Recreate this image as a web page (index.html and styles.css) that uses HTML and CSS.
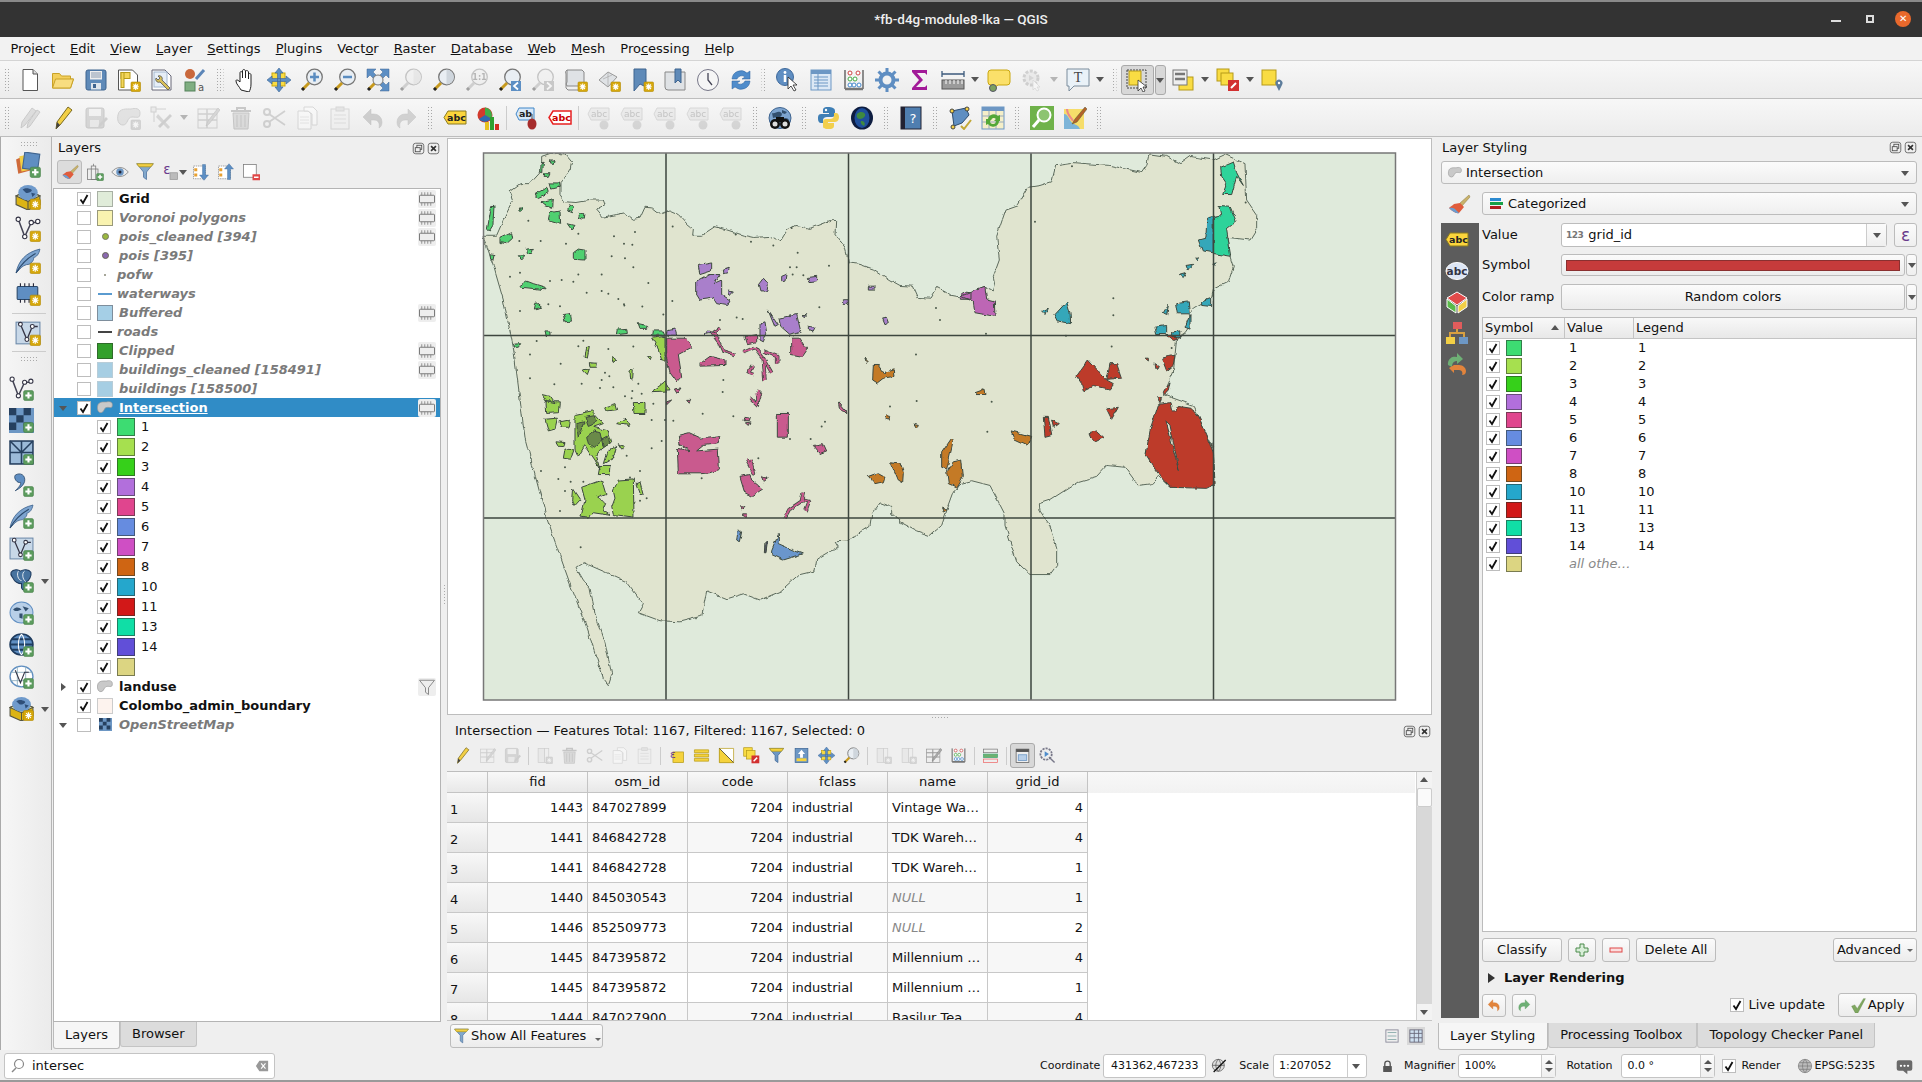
FILE: index.html
```html
<!DOCTYPE html>
<html lang="en">
<head>
<meta charset="utf-8">
<title>*fb-d4g-module8-lka — QGIS</title>
<link rel="stylesheet" href="styles.css">
</head>
<body>
<svg class="defs" width="0" height="0">
<defs>
<symbol id="gb" viewBox="0 0 24 24"><rect x="14" y="14" width="9.5" height="9.5" rx="1" fill="#d6a80c" stroke="#b38a00" stroke-width=".6"/><path d="M18.7 15.5v6.5M15.7 18.7h6M16.5 16.5l4.500 4.500M21 16.500l-4.500 4.500" stroke="#fff" stroke-width="1.100"/></symbol>
<symbol id="pb" viewBox="0 0 24 24"><rect x="14" y="14" width="9.500" height="9.500" rx="1.500" fill="#5c9c5e" stroke="#3f7a42" stroke-width=".5"/><path d="M18.700 15.700v6M15.700 18.700h6" stroke="#fff" stroke-width="2"/></symbol>
<symbol id="new" viewBox="0 0 24 24"><path d="M5 1.500h10l4.500 4.500v16.500H5z" fill="#fff" stroke="#555"/><path d="M15 1.500v4.500h4.500" fill="#ddd" stroke="#555"/></symbol>
<symbol id="open" viewBox="0 0 24 24"><path d="M1.500 20V5.500h7l2 2.500h9v3h3l-3 9z" fill="#f3cf5c" stroke="#c9a227"/><path d="M1.500 20l3-9h18l-3 9z" fill="#f8dd80" stroke="#c9a227"/></symbol>
<symbol id="save" viewBox="0 0 24 24"><rect x="2" y="2" width="20" height="20" rx="2" fill="#5f8ab8" stroke="#3f648f"/><rect x="6" y="3" width="12" height="8.500" fill="#eee"/><path d="M7 5h10M7 7h10M7 9h10" stroke="#8a9bb0"/><rect x="7" y="15" width="10" height="6.500" fill="#dfe5ec"/><rect x="9" y="16" width="3" height="4" fill="#3f648f"/></symbol>
<symbol id="layout" viewBox="0 0 24 24"><path d="M1.500 2h14l5 5v15h-19z" fill="#fff" stroke="#555"/><rect x="4" y="4.500" width="9" height="6" fill="#f3d65a" stroke="#b59a18"/><rect x="4" y="4.500" width="3" height="15" fill="#f3d65a" stroke="#b59a18"/><use href="#gb"/></symbol>
<symbol id="manager" viewBox="0 0 24 24"><path d="M2 2h13l6 6v14H2z" fill="#fff" stroke="#667"/><rect x="4" y="4" width="13" height="15" fill="#e6eef7" stroke="#a4b8d0"/><path d="M8 8a3 3 0 0 1 4 4l8 8-2 2-8-8a3 3 0 0 1-4-4l2 2 2-2z" fill="#d8c05a" stroke="#555" stroke-width=".8"/></symbol>
<symbol id="style" viewBox="0 0 24 24"><circle cx="7" cy="6" r="5" fill="#c9683c"/><path d="M13 11l8-9" stroke="#5c86b8" stroke-width="3"/><rect x="2" y="14" width="10" height="9" fill="#7fae81" stroke="#55825a"/><text x="15" y="23" font-size="10" fill="#555" font-family="DejaVu Sans">a</text></symbol>
<symbol id="hand" viewBox="0 0 24 24"><path d="M7 22c-2-4-5-6-5-9 0-2 2-1 4 1V5c0-2 2-2 2.500 0v5-7c0-2 2.500-2 3 0v7-6c0-2 2.500-2 3 0v7-4c0-2 2.500-2 2.500 0v9c0 4-1 6-2 8z" fill="#fff" stroke="#222"/></symbol>
<symbol id="pan" viewBox="0 0 24 24"><rect x="5" y="5" width="13" height="13" fill="#f9dc43" stroke="#caa70f"/><path d="M12 0l4 5h-2.500v14H16l-4 5-4-5h2.500V5H8zM0 12l5-4v2.500h14V8l5 4-5 4v-2.500H5V16z" fill="#5d8fc4" stroke="#3c6595" stroke-width=".6"/></symbol>
<symbol id="mag" viewBox="0 0 24 24"><circle cx="14.500" cy="9" r="7.800" fill="#e9eef3" stroke="#777" stroke-width="1.300"/><path d="M9 15l-6.500 6.500" stroke="#c79a1e" stroke-width="3"/><path d="M4 20l-2 2" stroke="#222" stroke-width="3"/></symbol>
<symbol id="zin" viewBox="0 0 24 24"><use href="#mag"/><path d="M14.500 4.500v9M10 9h9" stroke="#5a8cc0" stroke-width="2.500"/></symbol>
<symbol id="zout" viewBox="0 0 24 24"><use href="#mag"/><path d="M10 9h9" stroke="#5a8cc0" stroke-width="2.500"/></symbol>
<symbol id="zfull" viewBox="0 0 24 24"><path d="M1 1h9l-3 3 3 3-3 3-3-3-3 3zM23 1v9l-3-3-3 3-3-3 3-3-3-3zM23 23h-9l3-3-3-3 3-3 3 3 3-3z" fill="#5d8fc4" stroke="#3c6595" stroke-width=".5"/><path d="M9 15l-6 6" stroke="#c79a1e" stroke-width="3"/><path d="M4 20l-2 2" stroke="#222" stroke-width="3"/><circle cx="12" cy="12" r="5" fill="#e9eef3" stroke="#777"/></symbol>
<symbol id="zlayer" viewBox="0 0 24 24"><use href="#mag"/><path d="M14.500 1.500a7.500 7.500 0 0 1 0 15z" fill="#cfd6dd"/></symbol>
<symbol id="z11" viewBox="0 0 24 24"><use href="#mag"/><text x="14.500" y="12" font-size="8" text-anchor="middle" fill="#555" font-family="DejaVu Sans" font-weight="700">1:1</text></symbol>
<symbol id="zlast" viewBox="0 0 24 24"><use href="#mag"/><rect x="13" y="13" width="10" height="10" fill="#5d8fc4"/><path d="M20 14.500l-4 3.500 4 3.500" fill="none" stroke="#fff" stroke-width="1.800"/></symbol>
<symbol id="znext" viewBox="0 0 24 24"><use href="#mag"/><rect x="13" y="13" width="10" height="10" fill="#5d8fc4"/><path d="M16 14.500l4 3.500-4 3.500" fill="none" stroke="#fff" stroke-width="1.800"/></symbol>
<symbol id="newmap" viewBox="0 0 24 24"><path d="M3 2h15l2 2v14H3a3 3 0 0 1 0-4z" fill="#dfe2e5" stroke="#888"/><path d="M3 2a3 3 0 0 0-1 4v14l2 2h10" fill="none" stroke="#888"/><use href="#gb"/></symbol>
<symbol id="new3d" viewBox="0 0 24 24"><path d="M2 12l9-8 9 5-9 10z" fill="#dfe2e5" stroke="#999"/><path d="M6 11l9-4M11 4v15" stroke="#aaa" stroke-width=".7"/><use href="#gb"/></symbol>
<symbol id="bookmark" viewBox="0 0 24 24"><path d="M4 1h12v18l-6-3-6 7z" fill="#5f8ab8" stroke="#3f648f"/><use href="#gb"/></symbol>
<symbol id="bookmarks" viewBox="0 0 24 24"><path d="M2 4h20v18H5a3 3 0 0 1-3-3z" fill="#dfe2e5" stroke="#888"/><path d="M12 1h6v14l-3-3-3 3z" fill="#5f8ab8" stroke="#3f648f"/></symbol>
<symbol id="clock" viewBox="0 0 24 24"><circle cx="12" cy="12" r="10.500" fill="#f5f5f5" stroke="#778"/><path d="M12 5v7l4 5" fill="none" stroke="#445" stroke-width="1.300"/></symbol>
<symbol id="refresh" viewBox="0 0 24 24"><path d="M3 11a9 9 0 0 1 15-6l3-2v8h-8l3-2a5 5 0 0 0-8 2z" fill="#4f8ccb" stroke="#2f629c" stroke-width=".5"/><path d="M21 13a9 9 0 0 1-15 6l-3 2v-8h8l-3 2a5 5 0 0 0 8-2z" fill="#4f8ccb" stroke="#2f629c" stroke-width=".5"/></symbol>
<symbol id="identify" viewBox="0 0 24 24"><circle cx="9" cy="9" r="8.500" fill="#5f8ec2" stroke="#3f6a9c"/><path d="M9 7v7" stroke="#fff" stroke-width="2.500"/><circle cx="9" cy="4.500" r="1.400" fill="#fff"/><path d="M12 9v12l3-3 3 5 2-1-3-5h4z" fill="#fff" stroke="#222" stroke-width=".8"/></symbol>
<symbol id="table" viewBox="0 0 24 24"><rect x="2" y="2" width="20" height="20" fill="#dce8f5" stroke="#6d97c4"/><rect x="2" y="2" width="20" height="4" fill="#6d97c4"/><path d="M5 9h14M5 12h14M5 15h14M5 18h14M9 6v16" stroke="#6d97c4"/></symbol>
<symbol id="calc" viewBox="0 0 24 24"><path d="M3 2v19M21 2v19" stroke="#555" stroke-width="1.300"/><path d="M3 21h18" stroke="#777" stroke-width="2.500"/><circle cx="8" cy="5" r="2" fill="#fff" stroke="#c44"/><circle cx="16" cy="5" r="2" fill="#fff" stroke="#c44"/><circle cx="8" cy="11" r="2" fill="#fff" stroke="#4a4"/><circle cx="13" cy="11" r="2" fill="#fff" stroke="#4a4"/><circle cx="8" cy="17" r="2" fill="#fff" stroke="#48c"/><circle cx="12" cy="17" r="2" fill="#fff" stroke="#48c"/><circle cx="17" cy="17" r="2" fill="#fff" stroke="#48c"/></symbol>
<symbol id="gear" viewBox="0 0 24 24"><circle cx="12" cy="12" r="6.500" fill="none" stroke="#5f8ec2" stroke-width="4"/><path d="M12 0v5M12 19v5M0 12h5M19 12h5M3.500 3.500L7 7M17 17l3.500 3.500M20.500 3.500L17 7M7 17l-3.500 3.500" stroke="#5f8ec2" stroke-width="3"/></symbol>
<symbol id="sigma" viewBox="0 0 24 24"><path d="M4 2h15v5l-2-2H9l6 7-7 7h9l2-2v5H4v-2l7-8-7-8z" fill="#a21a98"/></symbol>
<symbol id="ruler" viewBox="0 0 24 24"><path d="M1 6h22M1 3v6M23 3v6" stroke="#3c5a7c" stroke-width="1.300"/><rect x="1" y="12" width="22" height="9" fill="#9a9a9a" stroke="#555"/><path d="M5 12v4M9 12v4M13 12v4M17 12v4M21 12v4" stroke="#fff"/></symbol>
<symbol id="balloon" viewBox="0 0 24 24"><path d="M4 2h16a3 3 0 0 1 3 3v9a3 3 0 0 1-3 3H11l-4 3v-3H4a3 3 0 0 1-3-3V5a3 3 0 0 1 3-3z" fill="#fbe06a" stroke="#caa70f"/><circle cx="6" cy="20" r="3.500" fill="#7da060" stroke="#556"/></symbol>
<symbol id="action" viewBox="0 0 24 24"><circle cx="11" cy="10" r="7" fill="#ddd" stroke="#999" stroke-width="3" stroke-dasharray="3 1.500"/><path d="M9 7l5 3-5 3z" fill="#aaa"/><path d="M13 12v10l2-2 2 3 2-1-2-3h3z" fill="#fff" stroke="#aaa" stroke-width=".7"/></symbol>
<symbol id="textann" viewBox="0 0 24 24"><path d="M1 1h22v17H8l-5 5v-5H1z" fill="#eaf2f8" stroke="#7a8c9c"/><text x="12" y="14" font-size="14" text-anchor="middle" fill="#444" font-family="Liberation Serif">T</text></symbol>
<symbol id="select" viewBox="0 0 24 24"><rect x="2" y="2" width="19" height="18" fill="none" stroke="#444" stroke-dasharray="2 1"/><rect x="4" y="3" width="12" height="14" fill="#f9dc43" stroke="#b59a18"/><path d="M13 12v11l3-3 2 4 2-1-2-4h4z" fill="#fff" stroke="#333" stroke-width=".8"/></symbol>
<symbol id="selform" viewBox="0 0 24 24"><rect x="8" y="9" width="14" height="13" fill="#f9dc43" stroke="#b59a18"/><rect x="2" y="2" width="14" height="15" fill="#eee" stroke="#777"/><path d="M4 6h10M4 11h10" stroke="#777" stroke-width="2.500"/></symbol>
<symbol id="desel" viewBox="0 0 24 24"><rect x="1" y="1" width="12" height="12" fill="#f9dc43" stroke="#b59a18"/><rect x="5" y="5" width="12" height="12" fill="#f9dc43" stroke="#b59a18"/><rect x="12" y="12" width="11" height="11" fill="#d23030"/><path d="M15 20l5-5" stroke="#fff" stroke-width="2"/></symbol>
<symbol id="selloc" viewBox="0 0 24 24"><rect x="1" y="2" width="14" height="15" fill="#f9dc43" stroke="#b59a18"/><path d="M18 23l-3-6a3.500 3.500 0 1 1 6 0z" fill="#5d7d9c"/><circle cx="18" cy="15" r="1.200" fill="#fff"/></symbol>
<symbol id="pencils" viewBox="0 0 24 24"><path d="M3 22l1-6L14 2l4 3L7 19zM9 22l1-5L19 4l3 2L12 20z" fill="#bbb" stroke="#888"/></symbol>
<symbol id="pencil" viewBox="0 0 24 24"><path d="M5 23l1-7L17 1l4 3L9 19z" fill="#f2cf45" stroke="#7a6a20"/><path d="M5 23l1-7 3 3z" fill="#444"/></symbol>
<symbol id="saveedit" viewBox="0 0 24 24"><rect x="2" y="2" width="18" height="20" rx="2" fill="#aaa" stroke="#888"/><rect x="5" y="3" width="12" height="7" fill="#eee"/><rect x="6" y="14" width="9" height="7" fill="#ddd"/><path d="M14 22l1-4 7-7 2 2-7 7z" fill="#999"/></symbol>
<symbol id="blob" viewBox="0 0 24 24"><path d="M1 9c1-7 9-6 13-6 4-1 9-1 9 4 0 6-3 4-8 4s-4 8-9 8-6-6-5-10z" fill="#c9c9c9" stroke="#999"/></symbol>
<symbol id="digit" viewBox="0 0 24 24"><use href="#blob"/><use href="#gb"/></symbol>
<symbol id="tools" viewBox="0 0 24 24"><rect x="1" y="1" width="5" height="5" fill="#ddd" stroke="#999"/><path d="M6 3h10M4 6v10" stroke="#999"/><path d="M8 8l12 13-2 2L6 11z" fill="#aaa"/><path d="M20 8L8 20l2 2 12-12z" fill="#999"/></symbol>
<symbol id="tabedit" viewBox="0 0 24 24"><rect x="2" y="3" width="19" height="19" fill="#eee" stroke="#999"/><path d="M2 8h19M2 14h19M11 3v19" stroke="#999" stroke-width="1.500"/><path d="M10 20l2-5L22 2l2 2-11 14z" fill="#aaa" stroke="#777" stroke-width=".6"/></symbol>
<symbol id="trash" viewBox="0 0 24 24"><path d="M2 5h20M8 5V2h8v3" fill="none" stroke="#a77" stroke-width="2"/><path d="M4 7h16l-1 16H5z" fill="#c4b4b4" stroke="#977"/><path d="M8 9v12M12 9v12M16 9v12" stroke="#977"/></symbol>
<symbol id="scissors" viewBox="0 0 24 24"><circle cx="5" cy="6" r="3" fill="none" stroke="#999" stroke-width="2"/><circle cx="5" cy="18" r="3" fill="none" stroke="#999" stroke-width="2"/><path d="M7 8l16 11M7 16L23 5" stroke="#999" stroke-width="1.800"/></symbol>
<symbol id="copy" viewBox="0 0 24 24"><path d="M3 5h10l3 3v15H3z" fill="#fff" stroke="#aaa"/><path d="M9 1h9l4 4v14h-5V8l-4-3H9z" fill="#fff" stroke="#aaa"/><path d="M5 11h9M5 14h9M5 17h9" stroke="#ccc"/></symbol>
<symbol id="paste" viewBox="0 0 24 24"><rect x="3" y="3" width="18" height="20" fill="#eee" stroke="#aaa"/><rect x="8" y="1" width="8" height="4" fill="#ccc" stroke="#aaa"/><path d="M6 9h12M6 13h12M6 17h12" stroke="#bbb"/></symbol>
<symbol id="undo" viewBox="0 0 24 24"><path d="M10 3v5h3a8 8 0 0 1 8 8c0 3-1 5-3 6 1-5-1-8-5-8h-3v5L2 11z" fill="#e2843c" stroke="#c96a20" stroke-width=".5"/></symbol>
<symbol id="redo" viewBox="0 0 24 24"><path d="M14 3v5h-3a8 8 0 0 0-8 8c0 3 1 5 3 6-1-5 1-8 5-8h3v5l8-8z" fill="#6eb075" stroke="#4e9055" stroke-width=".5"/></symbol>
<symbol id="labelc" viewBox="0 0 24 24"><path d="M5 5h18v13H5l-4-6.500z" fill="#fbd53c" stroke="#8a7a20"/><text x="13.500" y="15" font-size="9.500" font-weight="700" text-anchor="middle" fill="#222" font-family="DejaVu Sans">abc</text></symbol>
<symbol id="diagram" viewBox="0 0 24 24"><circle cx="9" cy="9" r="7.500" fill="#d23a2c"/><path d="M9 9V1.500a7.500 7.500 0 0 1 6 11z" fill="#3fae49"/><path d="M9 9l6 3.500A7.500 7.500 0 0 1 3 13z" fill="#2c6ab0"/><rect x="9" y="16" width="4" height="8" fill="#e8c020"/><rect x="14" y="11" width="4" height="13" fill="#2fa030"/><rect x="19" y="18" width="4" height="6" fill="#d03020"/></symbol>
<symbol id="labelpin" viewBox="0 0 24 24"><path d="M4 2h15v12H4l-3-6z" fill="#d8e8f8" stroke="#3f86c8"/><text x="10.500" y="11" font-size="9.500" font-weight="700" text-anchor="middle" fill="#222" font-family="DejaVu Sans">ab</text><path d="M17 8v6" stroke="#555"/><ellipse cx="17" cy="18" rx="4.500" ry="5.500" fill="#a62c2c"/></symbol>
<symbol id="labelred" viewBox="0 0 24 24"><path d="M5 5h18v13H5l-4-6.500z" fill="#fff" stroke="#e82020" stroke-width="1.500"/><text x="13.500" y="15" font-size="9.500" font-weight="700" text-anchor="middle" fill="#c00" font-family="DejaVu Sans">abc</text></symbol>
<symbol id="labelgray" viewBox="0 0 24 24"><path d="M4 2h18v12H4l-3-6z" fill="#ddd" stroke="#aaa"/><text x="12" y="11" font-size="9" text-anchor="middle" fill="#777" font-family="DejaVu Sans">abc</text><circle cx="17" cy="19" r="4.500" fill="#aaa"/></symbol>
<symbol id="globe" viewBox="0 0 24 24"><ellipse cx="12" cy="12" rx="11" ry="10.500" fill="#7da4cf" stroke="#3f648f"/><path d="M4 7c3 1 5-2 8-1s2 4 0 5-5 0-7 1zM14 13c3-2 6-1 7 1-2 4-4 5-6 4zM14 4l5 2-2 2-3-1z" fill="#33506f"/></symbol>
<symbol id="binoc" viewBox="0 0 24 24"><use href="#globe"/><circle cx="7" cy="18" r="5" fill="#111"/><circle cx="17" cy="18" r="5" fill="#111"/><circle cx="7" cy="18" r="2.500" fill="#ddd"/><circle cx="17" cy="18" r="2.500" fill="#ddd"/><rect x="8" y="11" width="8" height="5" fill="#111"/></symbol>
<symbol id="python" viewBox="0 0 24 24"><path d="M11 1c-5 0-5 2-5 4v2h6v1H4C1 8 1 11 1 13s1 4 3 4h2v-3c0-2 2-3 4-3h5c2 0 3-1 3-3V5c0-3-3-4-7-4z" fill="#3f7fb5"/><path d="M12 23c5 0 5-2 5-4v-2h-6v-1h7c3 0 4-3 4-5s-1-4-3-4h-2v3c0 2-2 3-4 3H9c-2 0-3 1-3 3v4c0 3 2 3 6 3z" fill="#f2cf4c"/><circle cx="9" cy="4" r="1.200" fill="#fff"/></symbol>
<symbol id="earth" viewBox="0 0 24 24"><ellipse cx="12" cy="12" rx="11" ry="11.500" fill="#0e1d40"/><ellipse cx="12" cy="12" rx="7.500" ry="10" fill="#1f4f9c"/><path d="M7 8c3-3 7-2 8 0s-2 5-5 5-4-3-3-5zM11 15c3 0 5 2 3 5-2-1-4-3-3-5z" fill="#3f8a3f"/></symbol>
<symbol id="help" viewBox="0 0 24 24"><rect x="2" y="1" width="20" height="22" fill="#4f7eb0" stroke="#223"/><rect x="2" y="1" width="4" height="22" fill="#223"/><text x="14" y="17" font-size="13" text-anchor="middle" fill="#fff" font-family="DejaVu Sans">?</text></symbol>
<symbol id="topo" viewBox="0 0 24 24"><path d="M4 5l14-3 3 7-7 8-8 3z" fill="#5f8ec2" stroke="#2c4a6c"/><circle cx="4" cy="5" r="2" fill="#f2cf45" stroke="#444"/><circle cx="19" cy="3" r="2" fill="#f2cf45" stroke="#444"/><circle cx="5" cy="21" r="2" fill="#f2cf45" stroke="#444"/><path d="M13 20l3 3 7-9" fill="none" stroke="#c2a838" stroke-width="2"/></symbol>
<symbol id="tabref" viewBox="0 0 24 24"><rect x="1" y="1" width="22" height="22" fill="#f5efc8" stroke="#6d97c4"/><rect x="1" y="1" width="22" height="4" fill="#6d97c4"/><path d="M1 10h22M1 16h22M8 5v18M15 5v18" stroke="#9ab"/><path d="M7 13a6 6 0 0 1 10-3l2-1v6h-6l2-2a3 3 0 0 0-5 1zM18 15a6 6 0 0 1-11 3l-2 1v-6h6l-2 2a3 3 0 0 0 6 0z" fill="#53a838"/></symbol>
<symbol id="gsearch" viewBox="0 0 24 24"><rect width="24" height="24" fill="#6fb24a"/><circle cx="14" cy="9" r="6.500" fill="#8cc470" stroke="#fff" stroke-width="2"/><path d="M9 14l-6 7" stroke="#fff" stroke-width="3"/></symbol>
<symbol id="mapedit" viewBox="0 0 24 24"><rect x="1" y="3" width="20" height="20" fill="#f6dd6a"/><path d="M1 8c5 0 5 8 10 10s5 3 6 5H1z" fill="#7db4d8"/><path d="M4 3c0 6 4 8 6 12" stroke="#e88" stroke-width="2" fill="none"/><path d="M9 18l3-5L22 1l2 2-10 13z" fill="#b4622a" stroke="#553" stroke-width=".5"/></symbol>
<symbol id="brush" viewBox="0 0 24 24"><path d="M13 11l9-8 1 2-8 9z" fill="#c9b26a" stroke="#8a7a40" stroke-width=".5"/><path d="M13 11l4 4-5 6c-3 1-7-2-10-5 1-1 4-3 5-4z" fill="#e05c3c"/><path d="M2 16c3-1 6 0 8 3l2 2c-3 1-7-2-10-5z" fill="#6b9dd0"/></symbol>
<symbol id="addlayer" viewBox="0 0 24 24"><path d="M1 7l10-5 3 15-11 3z" fill="#cf6a3a"/><path d="M4 4l11-2 1 14-10 2z" fill="#f2cf45"/><rect x="8" y="1" width="14" height="15" fill="#5f8ec2" stroke="#3f648f" transform="rotate(8 15 8)"/><use href="#pb"/></symbol>
<symbol id="cube" viewBox="0 0 24 24"><path d="M1 11l11-5 11 5v8l-11 5-11-5z" fill="#dcb414" stroke="#554"/><path d="M12 13v11" stroke="#554"/><path d="M1 11l11 5 11-5-11-5z" fill="#f0e8a0" stroke="#554"/><ellipse cx="12" cy="8" rx="9" ry="7" fill="#6f9acb"/><path d="M7 5c3-2 6-1 8 0s-2 4-5 3zM15 8l4 1-3 3z" fill="#2f4f78"/></symbol>
<symbol id="vtx" viewBox="0 0 24 24"><path d="M3 3l6 16 6-13h5" fill="none" stroke="#445" stroke-width="1.400"/><circle cx="3" cy="3" r="2" fill="#fff" stroke="#334"/><circle cx="9" cy="19" r="2" fill="#fff" stroke="#334"/><circle cx="15" cy="6" r="2" fill="#fff" stroke="#334"/><circle cx="21" cy="5" r="2" fill="#fff" stroke="#334"/></symbol>
<symbol id="feather" viewBox="0 0 24 24"><path d="M1 23C3 12 10 4 23 1c-1 5-3 7-6 8 1 2-2 5-4 6-3 0-7 2-9 5z" fill="#7da4cf" stroke="#3f648f" stroke-width=".8"/><path d="M1 23C6 14 12 9 19 5" stroke="#2c4a6c" fill="none"/></symbol>
<symbol id="chip" viewBox="0 0 24 24"><rect x="2" y="6" width="19" height="12" rx="1" fill="#5f8ec2" stroke="#2c4a6c"/><path d="M5 3v3M9 3v3M13 3v3M17 3v3M5 18v3M9 18v3M13 18v3M17 18v3" stroke="#223"/></symbol>
<symbol id="vframe" viewBox="0 0 24 24"><rect x="1" y="2" width="22" height="20" fill="#c8d8e8" stroke="#6d8aaa"/><path d="M5 4l6 14 5-12h5" fill="none" stroke="#334" stroke-width="1.200"/><circle cx="11" cy="18" r="1.800" fill="#fff" stroke="#334"/><circle cx="5" cy="4" r="1.800" fill="#fff" stroke="#334"/><circle cx="16" cy="6" r="1.800" fill="#fff" stroke="#334"/></symbol>
<symbol id="raster" viewBox="0 0 24 24"><rect width="24" height="24" fill="#6d97c4"/><path d="M0 0h7v7H0zM14 0h7v7h-7zM7 7h7v7H7zM0 14h7v7H0zM14 14h7v7h-7z" fill="#26405f"/></symbol>
<symbol id="mesh" viewBox="0 0 24 24"><rect x="1" y="1" width="22" height="22" fill="#9bbad8" stroke="#26405f" stroke-width="1.500"/><path d="M1 12h22M12 1v22M1 1l11 11M23 1L12 12" stroke="#26405f" stroke-width="1.500"/></symbol>
<symbol id="comma" viewBox="0 0 24 24"><path d="M6 3c5-3 10 0 9 6-1 4-5 7-9 9 3-3 6-6 5-8-3 1-7-4-5-7z" fill="#5f8ec2" stroke="#2c4a6c" stroke-width=".8"/></symbol>
<symbol id="pg" viewBox="0 0 24 24"><path d="M2 4c2-3 7-3 9-1 3-2 8-2 10 1 1 4-2 8-4 9v6c0 3-4 3-5 0v-4c-3 0-7-2-8-5-1-2-3-3-2-6z" fill="#47739f" stroke="#1f3c5f"/><path d="M9 3c-2 3 0 9 3 9M15 3c-3 2-2 8 1 10" stroke="#fff" fill="none" stroke-width=".8"/></symbol>
<symbol id="wms" viewBox="0 0 24 24"><ellipse cx="12" cy="12" rx="11" ry="10" fill="#b8cfe8" stroke="#5f8ec2"/><path d="M4 9c3-3 6-2 8 0-2 1-6 3-8 0zM13 6l6 2-3 3zM10 13l3 0 0 5-3-1z" fill="#33506f"/></symbol>
<symbol id="wcs" viewBox="0 0 24 24"><ellipse cx="12" cy="12" rx="11" ry="10" fill="#5f8ec2" stroke="#1f3c5f" stroke-width="1.500"/><path d="M1 12h22M3 7h18M3 17h18" stroke="#1f3c5f" stroke-width="2"/><path d="M12 2c-4 5-4 15 0 20M12 2c4 5 4 15 0 20" stroke="#fff" fill="none"/></symbol>
<symbol id="wfs" viewBox="0 0 24 24"><ellipse cx="12" cy="12" rx="11" ry="10" fill="#fff" stroke="#5f8ec2" stroke-width="1.300"/><path d="M1 8h22M1 16h22M8 2v20M16 2v20" stroke="#8ab" stroke-width=".8"/><path d="M6 6l5 12 4-10h4" fill="none" stroke="#334"/></symbol>
<symbol id="filterfn" viewBox="0 0 24 24"><path d="M1 1h22l-9 11v10l-4-3v-7z" fill="#82a8cc" stroke="#4a6f9c"/><path d="M1 1h22l-3 4H4z" fill="#f2cf45" stroke="#b59a18"/></symbol>
<symbol id="eye" viewBox="0 0 24 24"><path d="M1 12c6-8 16-8 22 0-6 8-16 8-22 0z" fill="#eee" stroke="#777"/><circle cx="12" cy="12" r="5" fill="#6d97c4"/><circle cx="12" cy="12" r="2" fill="#223"/></symbol>
<symbol id="addgroup" viewBox="0 0 24 24"><rect x="2" y="8" width="14" height="14" fill="#eee" stroke="#777"/><rect x="7" y="4" width="6" height="18" fill="none" stroke="#777"/><path d="M10 4V1" stroke="#777"/><use href="#pb"/></symbol>
<symbol id="expr" viewBox="0 0 24 24"><text x="8" y="14" font-size="18" text-anchor="middle" fill="#6a3b8c" font-family="DejaVu Sans">ε</text><rect x="12" y="13" width="10" height="9" fill="#bbb" stroke="#999"/></symbol>
<symbol id="expand" viewBox="0 0 24 24"><rect x="2" y="4" width="16" height="17" fill="#fff" stroke="#888" stroke-dasharray="2 1"/><rect x="3" y="7" width="4" height="4" fill="#e8a030"/><rect x="3" y="14" width="4" height="4" fill="#e8a030"/><path d="M14 2v14h-4l6 7 6-7h-4V2z" fill="#5d8fc4" stroke="#3c6595" stroke-width=".5"/></symbol>
<symbol id="collapse" viewBox="0 0 24 24"><rect x="2" y="4" width="16" height="17" fill="#fff" stroke="#888" stroke-dasharray="2 1"/><rect x="3" y="7" width="4" height="4" fill="#e8a030"/><rect x="3" y="14" width="4" height="4" fill="#e8a030"/><path d="M14 22V8h-4l6-7 6 7h-4v14z" fill="#5d8fc4" stroke="#3c6595" stroke-width=".5"/></symbol>
<symbol id="remove" viewBox="0 0 24 24"><rect x="2" y="2" width="17" height="17" fill="#fff" stroke="#777"/><rect x="14" y="15" width="10" height="8" fill="#e04848"/><rect x="16" y="18" width="6" height="2" fill="#fff"/></symbol>
<symbol id="memind" viewBox="0 0 24 24"><rect x="2" y="7" width="20" height="10" rx="1" fill="#eee" stroke="#777" stroke-width="1.300"/><path d="M5 3v4M9 3v4M13 3v4M17 3v4M5 17v4M9 17v4M13 17v4M17 17v4" stroke="#888" stroke-width="1.200"/></symbol>
<symbol id="filterind" viewBox="0 0 24 24"><path d="M2 3h20l-8 10v9l-4-3v-6z" fill="#eee" stroke="#888" stroke-width="1.300"/></symbol>
<symbol id="selrows" viewBox="0 0 24 24"><path d="M2 4h20v4H2zM2 10h20v4H2zM2 16h20v4H2z" fill="#f5d23c" stroke="#b59a18"/></symbol>
<symbol id="selexp" viewBox="0 0 24 24"><rect x="7" y="7" width="15" height="15" fill="#f5d23c" stroke="#b59a18"/><text x="7" y="15" font-size="15" text-anchor="middle" fill="#6a3b8c" font-family="DejaVu Sans">ε</text></symbol>
<symbol id="invert" viewBox="0 0 24 24"><path d="M2 2h20v20H2z" fill="#fff" stroke="#b59a18"/><path d="M2 2v20h20z" fill="#f5d23c" stroke="#b59a18"/><path d="M2 2l20 20" stroke="#444"/></symbol>
<symbol id="selfilter" viewBox="0 0 24 24"><path d="M2 2h20l-8 10v10l-4-3v-7z" fill="#6d97c4" stroke="#3c6595"/><path d="M2 2h20l-3 4H5z" fill="#f5d23c" stroke="#b59a18"/></symbol>
<symbol id="movetop" viewBox="0 0 24 24"><rect x="3" y="2" width="18" height="20" fill="#6d97c4" stroke="#3c6595"/><rect x="5" y="16" width="14" height="4" fill="#f5d23c"/><path d="M12 4l5 6h-3v5h-4v-5H7z" fill="#fff"/></symbol>
<symbol id="addfield" viewBox="0 0 24 24"><rect x="3" y="2" width="9" height="20" fill="#ddd" stroke="#999"/><rect x="12" y="2" width="6" height="20" fill="#eee" stroke="#999"/><use href="#gb"/></symbol>
<symbol id="organize" viewBox="0 0 24 24"><rect x="2" y="3" width="20" height="5" fill="#eee" stroke="#777"/><rect x="2" y="10" width="20" height="5" fill="#6fb06f" stroke="#4a7"/><rect x="2" y="17" width="20" height="5" fill="#eee" stroke="#e66"/></symbol>
<symbol id="dock" viewBox="0 0 24 24"><rect x="3" y="3" width="18" height="19" fill="#eee" stroke="#555"/><rect x="3" y="3" width="18" height="4" fill="#555"/><rect x="6" y="11" width="12" height="8" fill="#b8cfe8" stroke="#5f8ec2"/></symbol>
<symbol id="actions" viewBox="0 0 24 24"><circle cx="10" cy="10" r="8" fill="#eee" stroke="#778" stroke-width="2.500" stroke-dasharray="3 1.500"/><path d="M8 6l6 4-6 4z" fill="#4f8ccb"/><path d="M14 14l8 8" stroke="#778" stroke-width="2"/></symbol>
<symbol id="cubes" viewBox="0 0 24 24"><path d="M12 2l10 6-10 7L2 8z" fill="#e24a4a" stroke="#fff"/><path d="M2 9l9 7v7l-9-6z" fill="#5ab94a" stroke="#fff"/><path d="M22 9l-9 7v7l9-6z" fill="#f2cf45" stroke="#fff"/></symbol>
<symbol id="tree" viewBox="0 0 24 24"><rect x="8" y="1" width="9" height="7" fill="#e05c5c"/><rect x="1" y="16" width="9" height="7" fill="#f2cf45"/><rect x="14" y="16" width="9" height="7" fill="#6d97c4"/><path d="M12 8v4M5 16v-4h14v4" stroke="#d8a040" stroke-width="2" fill="none"/></symbol>
<symbol id="hist" viewBox="0 0 24 24"><path d="M3 13a7 7 0 0 1 9-8V1l6 6-6 5V9c-3 0-5 2-5 6z" fill="#6eb075"/><path d="M9 13h5c4 0 7 3 7 6s-2 4-4 4c1-2 0-5-3-5h-5v3l-5-5z" fill="#e2843c"/></symbol>
<symbol id="abcw" viewBox="0 0 24 24"><ellipse cx="12" cy="12" rx="11" ry="8.500" fill="#dde6f5" stroke="#fff"/><text x="12" y="16" font-size="10.500" font-weight="700" text-anchor="middle" fill="#334" font-family="DejaVu Sans">abc</text></symbol>
<symbol id="globegrid" viewBox="0 0 24 24"><circle cx="12" cy="12" r="10" fill="#bbb" stroke="#777"/><path d="M2 12h20M12 2c-5 6-5 14 0 20M12 2c5 6 5 14 0 20M4 7h16M4 17h16" stroke="#777" fill="none"/></symbol>
<symbol id="chat" viewBox="0 0 24 24"><path d="M4 3h16a3 3 0 0 1 3 3v9a3 3 0 0 1-3 3h-4v5l-6-5H4a3 3 0 0 1-3-3V6a3 3 0 0 1 3-3z" fill="#6a6a6a"/><circle cx="7" cy="11" r="1.600" fill="#fff"/><circle cx="12" cy="11" r="1.600" fill="#fff"/><circle cx="17" cy="11" r="1.600" fill="#fff"/></symbol>
<symbol id="lock" viewBox="0 0 24 24"><path d="M7 11V7a5 5 0 0 1 10 0v4" fill="none" stroke="#555" stroke-width="2.500"/><rect x="4" y="11" width="16" height="11" rx="1" fill="#555"/></symbol>
<symbol id="crs" viewBox="0 0 24 24"><circle cx="11" cy="11" r="9" fill="#ddd" stroke="#444"/><path d="M2 11h18M11 2c-5 5-5 13 0 18M11 2c5 5 5 13 0 18" stroke="#444" fill="none"/><path d="M4 21L22 3" stroke="#111" stroke-width="2"/></symbol>
<symbol id="x" viewBox="0 0 16 16"><rect x="1.500" y="1.500" width="13" height="13" rx="3" fill="none" stroke="#555"/><path d="M5 5l6 6M11 5l-6 6" stroke="#333" stroke-width="2"/></symbol>
<symbol id="float" viewBox="0 0 16 16"><rect x="1.500" y="1.500" width="13" height="13" rx="3" fill="none" stroke="#555"/><rect x="6" y="4" width="6" height="5" fill="none" stroke="#444"/><rect x="4" y="7" width="6" height="5" fill="#eee" stroke="#444"/></symbol>
<symbol id="plus" viewBox="0 0 24 24"><path d="M9 3h6v6h6v6h-6v6H9v-6H3V9h6z" fill="#d8eed8" stroke="#4a8a4a" stroke-width="1.500"/></symbol>
<symbol id="minus" viewBox="0 0 24 24"><rect x="3" y="9" width="18" height="6" fill="#fbdede" stroke="#e04848" stroke-width="1.500"/></symbol>
<symbol id="apply" viewBox="0 0 24 24"><path d="M1 13l5-2 4 6L20 1h3L11 24H7z" fill="#7fa860" stroke="#5a7e40" stroke-width=".6"/></symbol>
<symbol id="search" viewBox="0 0 16 16"><circle cx="9" cy="6" r="4.500" fill="none" stroke="#888" stroke-width="1.200"/><path d="M6 10l-4 4" stroke="#888" stroke-width="1.400"/></symbol>
<symbol id="clear" viewBox="0 0 16 16"><path d="M5 2h10v12H5L1 8z" fill="#999"/><path d="M7 5l5 6M12 5l-5 6" stroke="#fff" stroke-width="1.300"/></symbol>
<symbol id="filtericon" viewBox="0 0 24 24"><path d="M1 1h22l-9 10v12l-4-3V11z" fill="#82a8cc" stroke="#4a6f9c"/><path d="M1 1h22l-3 4H4z" fill="#f2cf45" stroke="#b59a18"/></symbol>
<symbol id="viewform" viewBox="0 0 16 16"><rect x="1" y="1" width="14" height="14" fill="#eee" stroke="#889"/><path d="M3 4h10M3 8h10M3 12h10" stroke="#8aa"/></symbol>
<symbol id="viewtable" viewBox="0 0 16 16"><rect x="1" y="1" width="14" height="14" fill="#cfe0f0" stroke="#667"/><path d="M1 5h14M1 10h14M6 1v14M11 1v14" stroke="#667"/></symbol>
<filter id="rough" filterUnits="userSpaceOnUse" x="-20" y="-20" width="2840" height="1640"><feTurbulence type="fractalNoise" baseFrequency="0.035 0.04" numOctaves="3" seed="4"/><feDisplacementMap in="SourceGraphic" scale="13" xChannelSelector="R" yChannelSelector="G"/></filter>
</defs>
</svg>

<div class="app">
  <header class="titlebar">
    <span></span>
    <span class="title-text">*fb-d4g-module8-lka — QGIS</span>
    <div class="wincontrols">
      <span class="win-min"></span>
      <span class="win-max"></span>
      <span class="win-close">✕</span>
    </div>
  </header>

  <nav class="menubar">
    <span>Pro<u>j</u>ect</span><span><u>E</u>dit</span><span><u>V</u>iew</span><span><u>L</u>ayer</span><span><u>S</u>ettings</span><span><u>P</u>lugins</span><span>Vect<u>o</u>r</span><span><u>R</u>aster</span><span><u>D</u>atabase</span><span><u>W</u>eb</span><span><u>M</u>esh</span><span>Pro<u>c</u>essing</span><span><u>H</u>elp</span>
  </nav>

  <div class="toolbar tb-first">
    <i class="grip g-narrow"></i>
    <b class="tb"><svg><use href="#new"/></svg></b><b class="tb"><svg><use href="#open"/></svg></b><b class="tb"><svg><use href="#save"/></svg></b><b class="tb"><svg><use href="#layout"/></svg></b><b class="tb"><svg><use href="#manager"/></svg></b><b class="tb"><svg><use href="#style"/></svg></b>
    <i class="grip g-wide"></i>
    <b class="tb"><svg><use href="#hand"/></svg></b><b class="tb"><svg><use href="#pan"/></svg></b><b class="tb"><svg><use href="#zin"/></svg></b><b class="tb"><svg><use href="#zout"/></svg></b><b class="tb"><svg><use href="#zfull"/></svg></b><b class="tb off"><svg><use href="#zlayer"/></svg></b><b class="tb"><svg><use href="#zlayer"/></svg></b><b class="tb off"><svg><use href="#z11"/></svg></b><b class="tb"><svg><use href="#zlast"/></svg></b><b class="tb off"><svg><use href="#znext"/></svg></b><b class="tb"><svg><use href="#newmap"/></svg></b><b class="tb"><svg><use href="#new3d"/></svg></b><b class="tb"><svg><use href="#bookmark"/></svg></b><b class="tb"><svg><use href="#bookmarks"/></svg></b><b class="tb"><svg><use href="#clock"/></svg></b><b class="tb"><svg><use href="#refresh"/></svg></b>
    <i class="grip g-mid"></i>
    <b class="tb"><svg><use href="#identify"/></svg></b><b class="tb"><svg><use href="#table"/></svg></b><b class="tb"><svg><use href="#calc"/></svg></b><b class="tb"><svg><use href="#gear"/></svg></b><b class="tb"><svg><use href="#sigma"/></svg></b><b class="tb"><svg><use href="#ruler"/></svg></b><i class="drop"></i><b class="tb"><svg><use href="#balloon"/></svg></b><b class="tb off"><svg><use href="#action"/></svg></b><i class="drop off"></i><b class="tb"><svg><use href="#textann"/></svg></b><i class="drop"></i>
    <i class="grip g-mid"></i>
    <b class="tb tb-active"><svg><use href="#select"/></svg></b><i class="drop drop-active"></i><b class="tb tb-slim"><svg><use href="#selform"/></svg></b><i class="drop"></i><b class="tb tb-slim"><svg><use href="#desel"/></svg></b><i class="drop"></i><b class="tb tb-slim"><svg><use href="#selloc"/></svg></b>
  </div>

  <div class="toolbar tb-second">
    <i class="grip g-narrow"></i>
    <b class="tb off"><svg><use href="#pencils"/></svg></b><b class="tb"><svg><use href="#pencil"/></svg></b><b class="tb off"><svg><use href="#saveedit"/></svg></b><b class="tb off"><svg><use href="#digit"/></svg></b><b class="tb off"><svg><use href="#tools"/></svg></b><i class="drop off"></i><b class="tb off"><svg><use href="#tabedit"/></svg></b><b class="tb off"><svg><use href="#trash"/></svg></b><b class="tb off"><svg><use href="#scissors"/></svg></b><b class="tb off"><svg><use href="#copy"/></svg></b><b class="tb off"><svg><use href="#paste"/></svg></b><b class="tb off"><svg><use href="#undo"/></svg></b><b class="tb off"><svg><use href="#redo"/></svg></b>
    <i class="grip"></i>
    <b class="tb"><svg><use href="#labelc"/></svg></b><b class="tb"><svg><use href="#diagram"/></svg></b><i class="sep"></i><b class="tb"><svg><use href="#labelpin"/></svg></b><b class="tb"><svg><use href="#labelred"/></svg></b><i class="sep"></i><b class="tb off"><svg><use href="#labelgray"/></svg></b><b class="tb off"><svg><use href="#labelgray"/></svg></b><b class="tb off"><svg><use href="#labelgray"/></svg></b><b class="tb off"><svg><use href="#labelgray"/></svg></b><b class="tb off"><svg><use href="#labelgray"/></svg></b>
    <i class="grip"></i>
    <b class="tb"><svg><use href="#binoc"/></svg></b>
    <i class="grip"></i>
    <b class="tb"><svg><use href="#python"/></svg></b><b class="tb"><svg><use href="#earth"/></svg></b>
    <i class="grip"></i>
    <b class="tb"><svg><use href="#help"/></svg></b>
    <i class="grip"></i>
    <b class="tb"><svg><use href="#topo"/></svg></b><b class="tb"><svg><use href="#tabref"/></svg></b>
    <i class="grip"></i>
    <b class="tb"><svg><use href="#gsearch"/></svg></b><b class="tb"><svg><use href="#mapedit"/></svg></b>
    <i class="grip"></i>
  </div>

  <main class="workspace">
    <aside class="leftbar">
      <i class="hgrip"></i>
      <div class="lb-group lb-a">
        <b class="lb"><svg><use href="#addlayer"/></svg></b>
        <b class="lb"><svg><use href="#cube"/><use href="#gb"/></svg></b>
        <b class="lb"><svg><use href="#vtx"/><use href="#gb"/></svg></b>
        <b class="lb"><svg><use href="#feather"/><use href="#gb"/></svg></b>
        <b class="lb"><svg><use href="#chip"/><use href="#gb"/></svg></b>
        <i class="hsep"></i>
        <b class="lb"><svg><use href="#vframe"/><use href="#gb"/></svg></b>
        <i class="hsep"></i>
      </div>
      <i class="hgrip"></i>
      <div class="lb-group lb-b">
        <b class="lb"><svg><use href="#vtx"/><use href="#pb"/></svg></b>
        <b class="lb"><svg><use href="#raster"/><use href="#pb"/></svg></b>
        <b class="lb"><svg><use href="#mesh"/><use href="#pb"/></svg></b>
        <b class="lb"><svg><use href="#comma"/><use href="#pb"/></svg></b>
        <b class="lb"><svg><use href="#feather"/><use href="#pb"/></svg></b>
        <b class="lb"><svg><use href="#vframe"/><use href="#pb"/></svg></b>
        <b class="lb lb-dd"><svg><use href="#pg"/><use href="#pb"/></svg><i class="drop"></i></b>
        <b class="lb"><svg><use href="#wms"/><use href="#pb"/></svg></b>
        <b class="lb"><svg><use href="#wcs"/><use href="#pb"/></svg></b>
        <b class="lb"><svg><use href="#wfs"/><use href="#pb"/></svg></b>
        <b class="lb lb-dd"><svg><use href="#cube"/><use href="#gb"/></svg><i class="drop"></i></b>
      </div>
    </aside>

    <section class="layers-dock">
      <div class="dock-title dt-l"><span>Layers</span><span class="dock-btns"><svg><use href="#float"/></svg><svg><use href="#x"/></svg></span></div>
      <div class="panel-tools">
        <b class="pt pt-active"><svg><use href="#brush"/></svg></b><b class="pt"><svg><use href="#addgroup"/></svg></b><b class="pt"><svg><use href="#eye"/></svg></b><b class="pt"><svg><use href="#filterfn"/></svg></b><b class="pt"><svg><use href="#expr"/></svg></b><i class="drop drop-sm"></i><b class="pt"><svg><use href="#expand"/></svg></b><b class="pt"><svg><use href="#collapse"/></svg></b><b class="pt"><svg><use href="#remove"/></svg></b>
      </div>
      <div class="tree">
        <div class="row on"><i class="exp"></i><i class="chk ck"></i><i class="sym sq s-grid"></i><span>Grid</span><svg class="ind"><use href="#memind"/></svg></div>
        <div class="row"><i class="exp"></i><i class="chk"></i><i class="sym sq s-vor"></i><span>Voronoi polygons</span><svg class="ind"><use href="#memind"/></svg></div>
        <div class="row"><i class="exp"></i><i class="chk"></i><i class="sym"><i class="pt-dot d-pc"></i></i><span>pois_cleaned [394]</span><svg class="ind"><use href="#memind"/></svg></div>
        <div class="row"><i class="exp"></i><i class="chk"></i><i class="sym"><i class="pt-dot d-p"></i></i><span>pois [395]</span></div>
        <div class="row"><i class="exp"></i><i class="chk"></i><i class="sym sym-line"><i class="pt-dot d-w"></i></i><span>pofw</span></div>
        <div class="row"><i class="exp"></i><i class="chk"></i><i class="sym sym-line"><i class="ln l-water"></i></i><span>waterways</span></div>
        <div class="row"><i class="exp"></i><i class="chk"></i><i class="sym sq s-buf"></i><span>Buffered</span><svg class="ind"><use href="#memind"/></svg></div>
        <div class="row"><i class="exp"></i><i class="chk"></i><i class="sym sym-line"><i class="ln l-road"></i></i><span>roads</span></div>
        <div class="row"><i class="exp"></i><i class="chk"></i><i class="sym sq s-clip"></i><span>Clipped</span><svg class="ind"><use href="#memind"/></svg></div>
        <div class="row"><i class="exp"></i><i class="chk"></i><i class="sym sq s-bld"></i><span>buildings_cleaned [158491]</span><svg class="ind"><use href="#memind"/></svg></div>
        <div class="row"><i class="exp"></i><i class="chk"></i><i class="sym sq s-bld"></i><span>buildings [158500]</span></div>
        <div class="row sel"><i class="exp open"></i><i class="chk ck"></i><svg class="sym blob"><use href="#blob"/></svg><span>Intersection</span><svg class="ind"><use href="#memind"/></svg></div>
        <div class="child"><i class="chk ck"></i><i class="sw c1"></i><span>1</span></div>
        <div class="child"><i class="chk ck"></i><i class="sw c2"></i><span>2</span></div>
        <div class="child"><i class="chk ck"></i><i class="sw c3"></i><span>3</span></div>
        <div class="child"><i class="chk ck"></i><i class="sw c4"></i><span>4</span></div>
        <div class="child"><i class="chk ck"></i><i class="sw c5"></i><span>5</span></div>
        <div class="child"><i class="chk ck"></i><i class="sw c6"></i><span>6</span></div>
        <div class="child"><i class="chk ck"></i><i class="sw c7"></i><span>7</span></div>
        <div class="child"><i class="chk ck"></i><i class="sw c8"></i><span>8</span></div>
        <div class="child"><i class="chk ck"></i><i class="sw c10"></i><span>10</span></div>
        <div class="child"><i class="chk ck"></i><i class="sw c11"></i><span>11</span></div>
        <div class="child"><i class="chk ck"></i><i class="sw c13"></i><span>13</span></div>
        <div class="child"><i class="chk ck"></i><i class="sw c14"></i><span>14</span></div>
        <div class="child"><i class="chk ck"></i><i class="sw c0"></i><span></span></div>
        <div class="row on"><i class="exp shut"></i><i class="chk ck"></i><svg class="sym blob"><use href="#blob"/></svg><span>landuse</span><svg class="ind ind-f"><use href="#filterind"/></svg></div>
        <div class="row on"><i class="exp"></i><i class="chk ck"></i><i class="sym sq s-col"></i><span>Colombo_admin_boundary</span></div>
        <div class="row"><i class="exp open"></i><i class="chk"></i><svg class="sym rast"><use href="#raster"/></svg><span>OpenStreetMap</span></div>
      </div>
      <div class="tabs">
        <span class="tab tab-on">Layers</span><span class="tab">Browser</span>
      </div>
    </section>

    <div class="vsplit"><i></i></div>

    <section class="center">
      <div class="mapcanvas">
        <svg class="map" viewBox="448 139 983 575">
          <rect x="483.500" y="153" width="912" height="547" fill="#dfeadb"/>
          <g transform="translate(470 140) scale(.33333 .36364)">
            <g filter="url(#rough)">
            <path class="land" d="M215 45L240 37 285 38 305 60 300 85 270 120 270 150 285 170 320 172 365 165 400 165 405 178 380 190 400 212 440 205 465 200 490 218 510 215 525 185 550 187 575 205 600 195 625 205 650 230 670 245 668 262 695 262 735 238 770 247 820 262 850 268 905 265 930 280 950 250 975 235 1020 243 1090 218 1097 225 1095 260 1125 295 1132 320 1135 338 1170 342 1210 355 1260 385 1290 400 1330 402 1345 433 1380 435 1400 405 1430 420 1440 427 1470 432 1545 405 1570 415 1575 400 1570 375 1588 330 1580 265 1608 190 1645 178 1675 130 1710 125 1745 115 1758 68 1805 62 1920 70 2015 90 2030 70 2037 38 2090 45 2130 65 2160 45 2230 55 2265 40 2325 65 2330 165 2360 205 2360 245 2340 275 2275 268 2280 320 2290 350 2275 390 2230 410 2225 435 2170 465 2155 480 2160 510 2145 530 2120 545 2110 640 2080 700 2170 730 2230 850 2235 950 2100 955 2065 925 2045 945 2005 950 1965 900 1910 895 1880 925 1825 940 1740 990 1708 1000 1710 1020 1740 1060 1760 1120 1760 1170 1740 1195 1680 1195 1640 1160 1605 1060 1605 1030 1560 950 1505 937 1470 945 1450 970 1430 1020 1415 1060 1380 1088 1340 1075 1290 1050 1265 1030 1265 1010 1230 998 1205 1030 1200 1060 1130 1103 1095 1105 1105 1120 1040 1155 1035 1185 990 1195 935 1240 870 1265 820 1248 770 1262 710 1240 695 1310 630 1325 570 1322 505 1300 520 1275 470 1215 410 1190 340 1162 318 1175 340 1210 360 1230 375 1300 405 1380 425 1470 415 1498 400 1480 350 1340 300 1220 230 1040 165 820 130 570 100 440 70 345 50 290 40 270 50 262 80 262 105 210 130 165 120 140 150 120 180 120 215 85Z"/>
            <path class="b g1" d="M65 180L75 180 72 230 58 250 52 245ZM90 270L125 255 128 270 110 285 90 282ZM325 300L345 303 345 330 310 328 310 310ZM150 400L170 388 190 395 225 405 228 412 155 405ZM240 200L270 195 272 232 235 222ZM212 170L250 162 248 188 225 180ZM295 178L310 185 305 200 290 195ZM330 200L342 203 340 218 325 215ZM292 230L315 235 305 247ZM240 118L265 118 268 130 245 135ZM195 150L230 130 235 145 205 158ZM225 90L240 90 235 100 222 100ZM213 65L220 65 218 90 212 88ZM445 520L470 518 472 532 442 535ZM280 480L298 478 302 498 285 500ZM195 445L215 460 190 465ZM550 525L580 525 585 537 548 537ZM240 55L252 55 250 65 238 63ZM145 187L158 187 155 196 147 195ZM60 315L75 318 72 330 62 328ZM225 525L240 525 240 540 228 540ZM170 300L190 298 185 312 172 312ZM145 318L165 320 155 330ZM505 505L530 510 530 518 510 518ZM130 562L152 560 145 570 135 570Z"/>
            <path class="b g2" d="M335 955L395 935 408 975 380 985 410 1000 400 1020 420 1032 370 1025 355 1040 333 1037 345 990ZM445 935L490 932 492 1037 430 1030 425 1010 435 985 430 965ZM315 755L365 745 400 780 370 790 415 800 425 830 395 850 380 870 390 905 375 880 345 840 325 870 315 850ZM228 720L268 720 265 750 230 752ZM225 768L262 765 255 795 235 800ZM490 722L525 722 525 752 492 752ZM545 545L585 540 585 605 575 605 565 575ZM545 692L585 665 600 690ZM358 612L382 614 380 625 360 625ZM400 735L435 725 440 742 405 745ZM440 780L465 765 478 785ZM285 850L312 852 302 878 280 875ZM390 895L420 895 418 920 385 920ZM510 940L520 975 510 975 498 945ZM270 775L298 770 295 790 275 790ZM215 700L240 705 255 725 230 720ZM410 860L440 840 430 875 400 890ZM258 830L285 832 280 843 262 842ZM445 835L465 845 455 850ZM308 960L330 990 315 1005 305 990ZM350 570L358 570 352 600 345 598ZM425 595L440 603 430 612ZM338 632L358 630 352 645ZM530 595L545 595 540 605ZM480 635L490 632 488 655 482 658Z"/>
            <path class="b dk" d="M320 780L345 775 335 800 325 820ZM350 815L370 800 390 805 395 825 370 845 355 835ZM395 825L415 815 420 835 400 845ZM345 760L375 755 380 775 355 785Z"/>
            <path class="br-under" d="M725 530L750 560 760 580 795 590M750 560L730 530 750 518M855 570L880 600 885 660M880 600L905 640M855 570L820 585M880 580L920 595 920 615M850 620L835 640 850 645M860 700L862 730 840 710M862 715L870 690M830 880L850 915 840 880M1000 970L995 990 1015 995 1005 1020M1000 990L960 1015 945 1040"/>
            <path class="br" d="M725 530L750 560 760 580 795 590M750 560L730 530 750 518M855 570L880 600 885 660M880 600L905 640M855 570L820 585M880 580L920 595 920 615M850 620L835 640 850 645M860 700L862 730 840 710M862 715L870 690M830 880L850 915 840 880M1000 970L995 990 1015 995 1005 1020M1000 990L960 1015 945 1040"/>
            <path class="b pk" d="M625 812L655 805 690 820 750 813 745 835 700 840 680 855 745 850 748 905 720 915 690 918 625 918 622 848 660 855 630 840ZM590 545L645 545 665 570 625 590 635 650 620 665 600 640 590 600ZM965 545L990 545 1010 575 995 595 965 590ZM810 925L840 920 845 935 878 960 845 980 825 970ZM922 752L955 752 955 820 922 820ZM690 615L720 595 765 605 765 620 690 622ZM1030 840L1060 835 1070 855 1050 862ZM825 540L860 535 860 555 832 560ZM1105 718L1130 745 1130 752 1108 735ZM610 685L630 682 618 697ZM590 720L605 715 590 728ZM650 716L662 716 658 724ZM825 760L838 762 835 772 822 772ZM826 778L840 775 835 785ZM875 925L892 932 880 940ZM812 1008L826 1010 815 1017ZM818 1028L830 1028 828 1037 818 1037Z"/>
            <path class="b pu" d="M685 345L725 338 725 360 690 370ZM680 390L720 370 750 370 730 395 755 385 755 425 780 440 770 455 740 450 730 435 690 440 680 425ZM880 380L895 395 890 415 870 415 865 398ZM930 490L980 480 992 525 960 535 935 515ZM895 470L925 510 915 515ZM760 355L778 350 775 362 762 365ZM1015 378L1040 375 1040 390 1020 392ZM935 375L948 370 945 388 935 390ZM870 505L885 500 890 530 880 555 870 550ZM590 525L615 520 620 537 590 537ZM1195 402L1215 402 1215 410 1195 410ZM1235 492L1250 490 1255 502 1242 508ZM775 415L790 418 780 428ZM1015 512L1035 515 1030 525 1015 522ZM1120 442L1135 442 1135 452 1122 452ZM712 525L735 530 705 535ZM995 480L1010 480 1005 487Z"/>
            <path class="b mg" d="M1470 430L1545 405 1550 440 1573 445 1575 485 1515 475 1510 445ZM1468 430L1485 418 1500 420 1500 438 1468 438Z"/>
            <path class="b or" d="M1210 620L1225 620 1240 640 1270 632 1272 650 1240 655 1222 668 1208 660ZM1185 597L1195 608 1190 612ZM1262 885L1290 888 1300 915 1298 942 1285 935ZM1195 925L1225 915 1245 925 1240 940 1215 945ZM1445 820L1450 825 1430 905 1415 900 1415 860ZM1450 885L1475 880 1480 925 1460 955 1435 945 1430 910ZM1250 758L1262 760 1260 770 1248 768ZM1332 780L1345 782 1340 792ZM1623 800L1685 815 1675 842 1635 825ZM1515 695L1545 685 1548 700 1520 700ZM1415 1012L1430 1018 1420 1023Z"/>
            <path class="b rd" d="M2065 728L2100 722 2105 745 2120 745 2125 730 2160 735 2185 760 2210 810 2230 860 2235 945 2210 958 2100 955 2080 935 2055 905 2028 865 2040 800ZM1820 650L1855 605 1880 630 1910 660 1930 670 1918 685 1870 675 1840 688 1835 670ZM1915 640L1920 615 1940 615 1955 655 1910 658ZM2075 600L2115 592 2110 620 2090 635ZM2080 695L2100 668 2095 690 2085 700ZM1910 740L1945 735 1925 768ZM1720 760L1735 760 1745 810 1725 815ZM1860 805L1880 800 1902 818 1872 832ZM2060 708L2075 708 2070 725ZM1745 770L1765 780 1750 790ZM2090 538L2115 536 2120 548 2110 552ZM2025 600L2035 600 2035 612ZM2055 615L2065 620 2058 632Z"/>
            <path class="b hole" d="M2088 772L2100 784 2128 912 2108 845Z"/>
            <path class="b te" d="M1755 480L1790 445 1800 475 1802 505 1765 498ZM2120 450L2155 445 2158 478 2125 478ZM2210 215L2230 210 2230 310 2200 305 2188 275 2208 270ZM2055 515L2090 510 2090 535 2060 535ZM2195 445L2225 435 2225 458 2195 455ZM2148 345L2168 342 2155 360ZM2128 370L2148 365 2140 378ZM2080 475L2095 452 2090 480ZM2145 515L2160 480 2160 520ZM1715 470L1732 462 1725 480ZM2105 528L2130 525 2128 540 2105 540ZM2230 340L2240 338 2235 345ZM2175 325L2185 325 2180 332Z"/>
            <path class="b mi" d="M2230 210L2255 205 2250 183 2280 185 2298 225 2270 245 2282 320 2230 312ZM2252 75L2290 60 2300 90 2320 125 2300 100 2285 150 2258 150 2270 120 2255 100Z"/>
            <path class="b bl" d="M905 1130L925 1085 925 1110 975 1130 1000 1138 940 1155 905 1140ZM805 1070L815 1075 808 1105 800 1100Z"/>
            <path class="b oth" d="M885 1108L892 1108 888 1135 883 1135Z"/>
            </g>
            <path class="dots" d="M150 190h0M175 222h0M148 278h0M212 278h0M288 285h0M325 258h0M432 265h0M462 285h0M495 253h0M487 288h0M425 320h0M465 325h0M490 350h0M275 385h0M325 370h0M395 370h0M535 393h0M415 423h0M395 415h0M445 437h0M462 452h0M517 458h0M150 470h0M235 452h0M270 457h0M608 238h0M607 443h0M797 260h0M843 280h0M910 290h0M965 242h0M983 310h0M1077 346h0M1048 460h0M960 350h0M968 370h0M980 350h0M1000 372h0M750 495h0M800 488h0M818 492h0M1398 462h0M1410 495h0M1338 590h0M1340 718h0M1260 733h0M760 660h0M758 693h0M698 753h0M790 760h0M1065 775h0M1055 788h0M960 822h0M1022 822h0M865 875h0M695 930h0M180 590h0M272 615h0M180 655h0M253 672h0M335 670h0M390 682h0M430 680h0M465 705h0M487 690h0M515 698h0M485 710h0M550 725h0M545 770h0M585 770h0M610 772h0M575 828h0M545 848h0M470 868h0M430 868h0M285 900h0M213 910h0M265 932h0M302 940h0M285 965h0M270 1020h0M332 1120h0M480 928h0M510 910h0M530 985h0M510 992h0M415 575h0M490 568h0M340 552h0M325 567h0M200 553h0M150 365h0M120 376h0M240 388h0M310 390h0M350 420h0M463 455h0M580 480h0M340 940h0M405 640h0M418 650h0M395 660h0M505 670h0M960 485h0M1565 720h0M1552 802h0M1806 72h0M1695 225h0M1930 435h0M1930 482h0M1925 568h0M2105 572h0M1788 538h0M2327 172h0M1548 533h0"/>
          </g>
          <path class="grid" d="M666 153V700M848.500 153V700M1031 153V700M1213.500 153V700M483.500 335.500H1395.500M483.500 518H1395.500"/>
          <rect class="frame" x="483.500" y="153" width="912" height="547"/>
        </svg>
      </div>
      <div class="hsplit"><i></i></div>
      <div class="attr-title"><span>Intersection — Features Total: 1167, Filtered: 1167, Selected: 0</span><span class="dock-btns"><svg><use href="#float"/></svg><svg><use href="#x"/></svg></span></div>
      <div class="attr-tools">
        <b class="at"><svg><use href="#pencil"/></svg></b><b class="at off"><svg><use href="#tabedit"/></svg></b><b class="at off"><svg><use href="#saveedit"/></svg></b><i class="vs"></i><b class="at off"><svg><use href="#addfield"/></svg></b><b class="at off"><svg><use href="#trash"/></svg></b><b class="at off"><svg><use href="#scissors"/></svg></b><b class="at off"><svg><use href="#copy"/></svg></b><b class="at off"><svg><use href="#paste"/></svg></b><i class="vs"></i><b class="at"><svg><use href="#selexp"/></svg></b><b class="at"><svg><use href="#selrows"/></svg></b><b class="at"><svg><use href="#invert"/></svg></b><b class="at"><svg><use href="#desel"/></svg></b><b class="at"><svg><use href="#selfilter"/></svg></b><b class="at"><svg><use href="#movetop"/></svg></b><b class="at"><svg><use href="#pan"/></svg></b><b class="at"><svg><use href="#zlayer"/></svg></b><i class="vs"></i><b class="at off"><svg><use href="#addfield"/></svg></b><b class="at off"><svg><use href="#addfield"/></svg></b><b class="at"><svg><use href="#tabedit"/></svg></b><b class="at"><svg><use href="#calc"/></svg></b><i class="vs"></i><b class="at"><svg><use href="#organize"/></svg></b><i class="vs"></i><b class="at at-active"><svg><use href="#dock"/></svg></b><b class="at"><svg><use href="#actions"/></svg></b>
      </div>
      <div class="attr-table">
        <div class="attr-scroll">
          <table class="grid-table">
            <thead><tr><th class="rh"></th><th>fid</th><th>osm_id</th><th>code</th><th>fclass</th><th>name</th><th>grid_id</th><th class="fill"></th></tr></thead>
            <tbody>
              <tr><th class="rh">1</th><td class="n">1443</td><td>847027899</td><td class="n">7204</td><td>industrial</td><td>Vintage Wa…</td><td class="n">4</td><td class="fill"></td></tr>
              <tr><th class="rh">2</th><td class="n">1441</td><td>846842728</td><td class="n">7204</td><td>industrial</td><td>TDK Wareh…</td><td class="n">4</td><td class="fill"></td></tr>
              <tr><th class="rh">3</th><td class="n">1441</td><td>846842728</td><td class="n">7204</td><td>industrial</td><td>TDK Wareh…</td><td class="n">1</td><td class="fill"></td></tr>
              <tr><th class="rh">4</th><td class="n">1440</td><td>845030543</td><td class="n">7204</td><td>industrial</td><td class="null">NULL</td><td class="n">1</td><td class="fill"></td></tr>
              <tr><th class="rh">5</th><td class="n">1446</td><td>852509773</td><td class="n">7204</td><td>industrial</td><td class="null">NULL</td><td class="n">2</td><td class="fill"></td></tr>
              <tr><th class="rh">6</th><td class="n">1445</td><td>847395872</td><td class="n">7204</td><td>industrial</td><td>Millennium …</td><td class="n">4</td><td class="fill"></td></tr>
              <tr><th class="rh">7</th><td class="n">1445</td><td>847395872</td><td class="n">7204</td><td>industrial</td><td>Millennium …</td><td class="n">1</td><td class="fill"></td></tr>
              <tr><th class="rh">8</th><td class="n">1444</td><td>847027900</td><td class="n">7204</td><td>industrial</td><td>Basilur Tea…</td><td class="n">4</td><td class="fill"></td></tr>
            </tbody>
          </table>
        </div>
        <div class="scrollbar"><i class="sb-up"></i><i class="sb-handle"></i><i class="sb-track"></i><i class="sb-down"></i></div>
      </div>
      <div class="attr-foot">
        <span class="btn show-all"><svg><use href="#filtericon"/></svg>Show All Features<i class="mini-drop"></i></span>
        <span class="view-btns"><svg><use href="#viewform"/></svg><svg class="view-on"><use href="#viewtable"/></svg></span>
      </div>
    </section>

    <div class="vsplit"></div>

    <section class="styling-dock">
      <div class="dock-title dt-r"><span>Layer Styling</span><span class="dock-btns"><svg><use href="#float"/></svg><svg><use href="#x"/></svg></span></div>
      <div class="combo combo-layer"><svg class="c-ic"><use href="#blob"/></svg><span>Intersection</span><i class="c-arrow"></i></div>
      <div class="render-row">
        <span class="brush-tab"><svg><use href="#brush"/></svg></span>
        <div class="combo combo-render"><span class="cat-ic"><i class="ci1"></i><i class="ci2"></i><i class="ci3"></i></span><span>Categorized</span><i class="c-arrow"></i></div>
      </div>
      <div class="style-body">
        <div class="style-tabs">
          <svg><use href="#labelc"/></svg><svg><use href="#abcw"/></svg><svg><use href="#cubes"/></svg><svg><use href="#tree"/></svg><svg><use href="#hist"/></svg>
        </div>
        <div class="style-col">
          <div class="f-row f-value"><label>Value</label><div class="field"><span class="badge123">123</span><span>grid_id</span><span class="f-drop"><i class="c-arrow"></i></span></div><span class="eps">ε</span></div>
          <div class="f-row f-symbol"><label>Symbol</label><div class="btn sym-btn"><i></i></div><span class="side-drop"><i class="c-arrow"></i></span></div>
          <div class="f-row f-ramp"><label>Color ramp</label><div class="btn ramp-btn">Random colors</div><span class="side-drop"><i class="c-arrow"></i></span></div>
          <div class="cat-table">
            <div class="cat-head"><span class="ch1">Symbol<i class="up"></i></span><span class="ch2">Value</span><span class="ch3">Legend</span></div>
            <div class="cat-row"><i class="chk ck"></i><i class="sw c1"></i><span class="cv">1</span><span>1</span></div>
            <div class="cat-row"><i class="chk ck"></i><i class="sw c2"></i><span class="cv">2</span><span>2</span></div>
            <div class="cat-row"><i class="chk ck"></i><i class="sw c3"></i><span class="cv">3</span><span>3</span></div>
            <div class="cat-row"><i class="chk ck"></i><i class="sw c4"></i><span class="cv">4</span><span>4</span></div>
            <div class="cat-row"><i class="chk ck"></i><i class="sw c5"></i><span class="cv">5</span><span>5</span></div>
            <div class="cat-row"><i class="chk ck"></i><i class="sw c6"></i><span class="cv">6</span><span>6</span></div>
            <div class="cat-row"><i class="chk ck"></i><i class="sw c7"></i><span class="cv">7</span><span>7</span></div>
            <div class="cat-row"><i class="chk ck"></i><i class="sw c8"></i><span class="cv">8</span><span>8</span></div>
            <div class="cat-row"><i class="chk ck"></i><i class="sw c10"></i><span class="cv">10</span><span>10</span></div>
            <div class="cat-row"><i class="chk ck"></i><i class="sw c11"></i><span class="cv">11</span><span>11</span></div>
            <div class="cat-row"><i class="chk ck"></i><i class="sw c13"></i><span class="cv">13</span><span>13</span></div>
            <div class="cat-row"><i class="chk ck"></i><i class="sw c14"></i><span class="cv">14</span><span>14</span></div>
            <div class="cat-row"><i class="chk ck"></i><i class="sw c0"></i><span class="cv other">all othe…</span><span></span></div>
          </div>
          <div class="cat-btns">
            <span class="btn b-classify">Classify</span>
            <span class="btn b-icon"><svg><use href="#plus"/></svg></span>
            <span class="btn b-icon"><svg><use href="#minus"/></svg></span>
            <span class="btn b-del">Delete All</span>
            <span class="btn b-adv">Advanced<i class="mini-drop"></i></span>
          </div>
          <div class="rendering"><i class="big-arrow"></i>Layer Rendering</div>
          <div class="apply-row">
            <span class="btn b-undo"><svg><use href="#undo"/></svg></span>
            <span class="btn b-undo"><svg><use href="#redo"/></svg></span>
            <span class="live"><i class="chk ck"></i>Live update</span>
            <span class="btn b-apply"><svg><use href="#apply"/></svg>Apply</span>
          </div>
        </div>
      </div>
      <div class="tabs tabs-r">
        <span class="tab tab-on">Layer Styling</span><span class="tab">Processing Toolbox</span><span class="tab">Topology Checker Panel</span>
      </div>
    </section>
  </main>

  <footer class="statusbar">
    <div class="locator"><svg class="l-s"><use href="#search"/></svg><span>intersec</span><svg class="l-c"><use href="#clear"/></svg></div>
    <span class="s-lab s-coord">Coordinate</span><span class="s-field s-fcoord">431362,467233</span><svg class="s-ic crs-ic"><use href="#crs"/></svg>
    <span class="s-lab s-scale">Scale</span><span class="s-field s-fscale">1:207052<i class="c-arrow"></i></span><svg class="s-ic lock-ic"><use href="#lock"/></svg>
    <span class="s-lab s-magn">Magnifier</span><span class="s-field s-fmag">100%<i class="spin"></i></span>
    <span class="s-lab s-rot">Rotation</span><span class="s-field s-frot">0.0 °<i class="spin"></i></span>
    <i class="chk ck s-chk"></i><span class="s-lab s-rend">Render</span>
    <svg class="s-ic glob-ic"><use href="#globegrid"/></svg><span class="s-lab s-epsg">EPSG:5235</span>
    <svg class="s-ic chat-ic"><use href="#chat"/></svg>
  </footer>
</div>
</body>
</html>
```

FILE: styles.css
```css
* { box-sizing: border-box; }
html, body { margin: 0; padding: 0; }
body { width: 1922px; height: 1082px; overflow: hidden; font: 13px/1.2 "DejaVu Sans", "Liberation Sans", sans-serif; color: #111; background: #efefef; }
.defs { position: absolute; }
i, b { font-style: normal; font-weight: normal; }
.app { display: flex; flex-direction: column; height: 1082px; }

.titlebar { height: 37px; flex: none; display: grid; grid-template-columns: 1fr auto 1fr; align-items: center; padding-bottom: 2px; background: #333; border-top: 2px solid #8a8a8a; color: #eee; font: 500 13.5px "Roboto", sans-serif; }
.wincontrols { display: flex; align-items: center; justify-content: flex-end; gap: 22px; padding-right: 11px; }
.win-min { width: 10px; height: 2px; background: #ddd; margin-top: 5px; margin-right: 3px; }
.win-max { width: 8px; height: 8px; border: 2px solid #ddd; }
.win-close { width: 16px; height: 16px; border-radius: 50%; background: #e9692c; color: #fff; font-size: 10px; line-height: 16px; text-align: center; margin-left: -1px; }

.menubar { height: 23px; flex: none; display: flex; align-items: center; padding-left: 5px; background: #f2f2f2; font-size: 13px; }
.menubar span { padding: 0 5.5px; margin-right: 4px; }

.toolbar { flex: none; display: flex; align-items: center; padding-left: 2px; background: linear-gradient(#f7f7f7, #ececec); border-top: 1px solid #d4d4d4; }
.tb-first { height: 38px; }
.tb-second { height: 39px; border-top: 1px solid #bdbdbd; border-bottom: 1px solid #bdbdbd; }
.grip { width: 16px; height: 24px; flex: none; background: radial-gradient(circle, #a8a8a8 .8px, transparent 1px) 5px 0 / 3px 3px; background-repeat: repeat; clip-path: inset(0 5px); }
.g-narrow { width: 11px; clip-path: inset(0 3px); }
.g-wide { width: 18.500px; clip-path: inset(0 6px); }
.g-mid { width: 13.500px; clip-path: inset(0 4px); }
.tb { width: 33px; height: 30px; flex: none; display: flex; align-items: center; justify-content: center; }
.tb svg { width: 24px; height: 24px; }
.tb-slim { width: 32px; }
.off { opacity: .38; filter: grayscale(1); }
.tb-active { background: #d8d8d8; border: 1px solid #aaa; border-radius: 3px; }
.drop { flex: none; width: 13px; height: 7px; position: relative; display: block; }
.drop::after { content: ""; position: absolute; left: 2px; top: 1px; border: 4px solid transparent; border-top: 5px solid #555; border-bottom: 0; }
.drop-active { width: 11px; height: 30px; background: #d8d8d8; border: 1px solid #aaa; border-radius: 3px; margin-left: 1px; margin-right: 1px; }
.drop-active::after { top: 12px; left: 0; }
.drop-sm { width: 11px; margin-left: -5px; }
.sep { width: 1px; height: 24px; background: #ccc; margin: 0 3px 0 2px; flex: none; }

.workspace { flex: 1; min-height: 0; display: flex; }
.leftbar { width: 52px; flex: none; background: linear-gradient(90deg, #f6f6f6, #ebebeb); border-left: 1px solid #aaa; border-right: 1px solid #b5b5b5; padding-top: 4px; }
.hgrip { display: block; width: 18px; height: 7px; margin: 0 auto 0 19px; background: radial-gradient(circle, #aaa .8px, transparent 1px) 0 0 / 3px 3px; }
.lb-group { display: flex; flex-direction: column; }
.lb-a { padding-left: 14px; padding-top: 1px; }
.lb-b { padding-left: 8px; padding-top: 9px; }
.lb { width: 32px; height: 32px; flex: none; display: flex; align-items: center; position: relative; }
.lb svg { width: 25px; height: 25px; }
.lb-a .lb svg { width: 26px; height: 26px; }
.lb-dd .drop { position: absolute; left: 30px; top: 14px; width: 9px; }
.hsep { display: block; height: 1px; width: 34px; background: #ccc; margin: 4px 0 3px -3px; flex: none; }
.lb-a .hsep:last-child { margin-top: 2px; margin-bottom: 4px; }

.layers-dock { width: 390px; flex: none; display: flex; flex-direction: column; padding: 0 1px; }
.dock-title { height: 22px; flex: none; display: flex; align-items: center; justify-content: space-between; padding: 0 1px 0 5px; font-size: 13px; }
.dock-btns { display: flex; gap: 2px; }
.dock-btns svg { width: 13px; height: 13px; }
.panel-tools { height: 29px; flex: none; display: flex; align-items: center; padding: 0 0 3px 4px; }
.pt { width: 25px; height: 24px; flex: none; display: flex; align-items: center; justify-content: center; }
.pt svg { width: 18px; height: 18px; }
.pt-active { background: #dcdcdc; border: 1px solid #bbb; border-radius: 3px; margin-right: 0; }
.tree { flex: 1; min-height: 0; background: #fff; border: 1px solid #b4b4b4; overflow: hidden; }
.row { height: 19px; display: flex; align-items: center; font-weight: 700; font-style: italic; color: #7a7a7a; white-space: nowrap; }
.row.on { color: #111; font-style: normal; }
.row.sel { background: #308cc6; color: #fff; font-style: normal; }
.row.sel span { text-decoration: underline; }
.exp { width: 23px; height: 10px; flex: none; position: relative; }
.exp.open::after { content: ""; position: absolute; left: 5px; top: 3px; border: 4px solid transparent; border-top: 5px solid #555; border-bottom: 0; }
.exp.shut::after { content: ""; position: absolute; left: 7px; top: 1px; border: 4px solid transparent; border-left: 5px solid #555; border-right: 0; }
.chk { display: block; width: 14px; height: 14px; flex: none; background: #fff; border: 1px solid #bdbdbd; }
.chk.ck { background: #fff url("data:image/svg+xml,%3Csvg xmlns='http://www.w3.org/2000/svg' viewBox='0 0 12 12'%3E%3Cpath d='M2.500 6.500l2.500 3.500 4.500-8' fill='none' stroke='%23111' stroke-width='1.800'/%3E%3C/svg%3E") center / 12px 12px no-repeat; }
.sym { width: 16px; height: 16px; flex: none; margin: 0 6px; display: flex; align-items: center; justify-content: center; }
.sym.sq { border: 1px solid #888; }
.sym-line { margin-right: 4px; }
.s-grid { background: #e0ecd9; border-color: #a8b0a4 !important; }
.s-vor { background: #f9f3b0; border-color: #99997a !important; }
.s-buf { background: #a5cfe6; border-color: #7e8e9c !important; }
.s-clip { background: #33a02c; border-color: #2f6b2a !important; }
.s-bld { background: #a6cee3; border-color: #b8cdd8 !important; }
.s-col { background: #fdf3ee; border-color: #ccc !important; }
.pt-dot { display: block; border-radius: 50%; }
.d-pc { width: 7px; height: 7px; background: #9ab83e; border: 1px solid #776; }
.d-p { width: 7px; height: 7px; background: #8a68b0; border: 1px solid #665; }
.d-w { width: 2px; height: 2px; background: #887; }
.ln { display: block; width: 14px; height: 2px; }
.l-water { background: #5a9bd0; }
.l-road { background: #444; }
.blob { overflow: visible; }
.rast { width: 13px; height: 13px; margin: 0 7px 0 8px; }
.ind { width: 18px; height: 18px; margin-left: auto; margin-right: 4px; flex: none; background: #eee; border-radius: 2px; }
.ind-f { background: #eee; }
.child { height: 20px; display: flex; align-items: center; padding-left: 43px; }
.sw { display: block; width: 18px; height: 18px; flex: none; margin: 0 6px; border: 1px solid rgba(40, 50, 40, .55); }
.c1 { background: #3ddc72; } .c2 { background: #a6e04f; } .c3 { background: #36d01a; } .c4 { background: #b26fdc; }
.c5 { background: #e0458e; } .c6 { background: #668ce0; } .c7 { background: #cf4fc4; } .c8 { background: #cf6513; }
.c10 { background: #25a7cc; } .c11 { background: #d21818; } .c13 { background: #10dea6; } .c14 { background: #614fd8; } .c0 { background: #dcd582; }

.tabs { height: 28px; flex: none; display: flex; align-items: flex-start; padding-left: 0; }
.tab { height: 25px; display: flex; align-items: center; padding: 0 11px; background: #dcdcdc; border: 1px solid #c4c4c4; border-top: 0; border-radius: 0 0 3px 3px; white-space: nowrap; }
.tab-on { background: #f6f6f6; height: 27px; margin-top: 0; border-color: #bbb; }

.vsplit { width: 5px; flex: none; display: flex; align-items: center; justify-content: center; }
.vsplit i { display: block; width: 3px; height: 20px; background: radial-gradient(circle, #aaa .8px, transparent 1px) 0 0 / 3px 3px; }

.center { width: 985px; flex: none; display: flex; flex-direction: column; padding-top: 1px; }
.mapcanvas { height: 577px; flex: none; background: #fff; border: 1px solid #bdbdbd; }
.map { display: block; width: 983px; height: 575px; }
.land { fill: #e0e4cf; stroke: #5c6a5c; stroke-width: 1; vector-effect: non-scaling-stroke; stroke-linejoin: round; }
.b { stroke: #3e4a40; stroke-width: 1; vector-effect: non-scaling-stroke; stroke-linejoin: round; }
.g1 { fill: #4fd070; } .g2 { fill: #9ad250; } .dk { fill: #6a8a48; } .pk { fill: #c95a8e; } .pu { fill: #a97fcb; }
.mg { fill: #bd66b5; } .or { fill: #c47a28; } .rd { fill: #bd3a2c; } .te { fill: #35a7b9; } .mi { fill: #2dd39a; } .bl { fill: #6a96cc; } .oth { fill: #556; } .hole { fill: #e0e4cf; }
.br-under { fill: none; stroke: #3e4a40; stroke-width: 3.600; vector-effect: non-scaling-stroke; stroke-linejoin: round; }
.br { fill: none; stroke: #c95a8e; stroke-width: 2; vector-effect: non-scaling-stroke; stroke-linejoin: round; }
.dots { fill: none; stroke: #4a584a; stroke-width: 2; stroke-linecap: round; vector-effect: non-scaling-stroke; }
.grid { fill: none; stroke: #3d463f; stroke-width: 1.500; }
.frame { fill: none; stroke: #777; stroke-width: 1.500; }

.hsplit { height: 5px; flex: none; display: flex; justify-content: center; align-items: center; }
.hsplit i { display: block; width: 18px; height: 3px; background: radial-gradient(circle, #aaa .8px, transparent 1px) 0 0 / 3px 3px; }
.attr-title { height: 22px; flex: none; display: flex; align-items: center; justify-content: space-between; padding: 0 1px 0 8px; }
.attr-tools { height: 30px; flex: none; display: flex; align-items: center; padding: 0 0 2px 3px; border-bottom: 1px solid #bdbdbd; }
.at { width: 25px; height: 25px; flex: none; display: flex; align-items: center; justify-content: center; }
.at svg { width: 17px; height: 17px; }
.at-active { background: #d8d8d8; border: 1px solid #aaa; border-radius: 3px; }
.vs { width: 1px; height: 18px; background: #ccc; margin: 0 3px; flex: none; }

.attr-table { height: 248px; flex: none; display: flex; background: #fff; }
.attr-scroll { flex: 1; min-width: 0; overflow: hidden; }
.grid-table { border-collapse: separate; border-spacing: 0; table-layout: fixed; width: 968px; }
.grid-table th, .grid-table td { padding: 0 4px; height: 30px; font-weight: 400; border-right: 1px solid #c8c8c8; border-bottom: 1px solid #c8c8c8; white-space: nowrap; overflow: hidden; text-align: left; }
.grid-table thead th { height: 21px; text-align: center; background: linear-gradient(#f8f8f8, #e8e8e8); border-color: #c4c4c4; }
.grid-table th:nth-child(1) { width: 41px; }
.grid-table th:nth-child(n+2) { width: 100px; }
.grid-table th.fill { width: auto; border: 0; background: linear-gradient(#f8f8f8, #f2f2f2); }
.grid-table tbody th { background: linear-gradient(#f8f8f8, #e6e6e6); padding: 5px 0 0 3px; }
.grid-table td.fill { border: 0; background: #fff !important; }
.grid-table tbody tr:nth-child(even) td { background: #f7f7f7; }
.n { text-align: right !important; }
.null { font-style: italic; color: #888; }
.scrollbar { width: 16px; flex: none; display: flex; flex-direction: column; background: #e8e8e8; border-left: 1px solid #d0d0d0; }
.sb-up, .sb-down { display: block; height: 16px; flex: none; background: #f3f3f3; position: relative; }
.sb-up::after { content: ""; position: absolute; left: 3px; top: 5px; border: 4px solid transparent; border-bottom: 5px solid #555; border-top: 0; }
.sb-down::after { content: ""; position: absolute; left: 3px; top: 6px; border: 4px solid transparent; border-top: 5px solid #555; border-bottom: 0; }
.sb-handle { display: block; height: 19px; flex: none; background: #fafafa; border: 1px solid #ccc; border-radius: 2px; }
.sb-track { display: block; flex: 1; background: #d8d8d8; }
.attr-foot { height: 30px; flex: none; display: flex; align-items: center; justify-content: space-between; padding: 1px 4px 0 3px; border-top: 1px solid #c4c4c4; }
.btn { display: flex; align-items: center; justify-content: center; background: linear-gradient(#fbfbfb, #ececec); border: 1px solid #bcbcbc; border-radius: 3px; white-space: nowrap; flex: none; }
.show-all { width: 153px; height: 24px; gap: 2px; position: relative; justify-content: flex-start; padding-left: 3px; }
.show-all svg { width: 15px; height: 18px; }
.mini-drop { display: block; margin-left: 7px; border: 3px solid transparent; border-top: 3px solid #666; border-bottom: 0; margin-top: 6px; }
.view-btns { display: flex; gap: 6px; align-items: center; margin-right: 3px; }
.view-btns svg { width: 18px; height: 18px; padding: 2px; }
.view-on { background: #d8d8d8; }

.styling-dock { width: 485px; flex: none; display: flex; flex-direction: column; padding: 0 5px 0 4px; }
.dt-r { padding: 0 0 3px 1px; height: 24px; }
.combo { height: 23px; display: flex; align-items: center; background: linear-gradient(#fbfbfb, #efefef); border: 1px solid #bcbcbc; border-radius: 3px; position: relative; padding-left: 5px; gap: 3px; }
.combo-layer { flex: none; }
.c-ic { width: 16px; height: 14px; }
.c-arrow { display: block; border: 4px solid transparent; border-top: 5px solid #555; border-bottom: 0; width: 0; height: 0; }
.combo .c-arrow { position: absolute; right: 7px; top: 9px; }
.render-row { flex: none; display: flex; align-items: center; margin-top: 8px; height: 23px; }
.brush-tab { width: 41px; display: flex; justify-content: center; padding-right: 5px; flex: none; }
.brush-tab svg { width: 24px; height: 24px; }
.combo-render { flex: 1; padding-left: 7px; gap: 5px; }
.cat-ic { display: flex; flex-direction: column; gap: 1px; width: 13px; }
.cat-ic i { display: block; height: 3px; }
.ci1 { background: #2b8ad0; width: 11px; }
.ci2 { background: #1aa048; width: 13px; }
.ci3 { background: #b02020; width: 11px; }
.style-body { flex: 1; min-height: 0; display: flex; margin-top: 8px; }
.style-tabs { width: 38px; flex: none; margin-right: 3px; background: #5c5c5c; display: flex; flex-direction: column; align-items: center; padding: 5px 7px 0 0; gap: 7px; }
.style-tabs svg { width: 24px; height: 24px; }
.style-col { flex: 1; min-width: 0; display: flex; flex-direction: column; }
.f-row { display: flex; align-items: center; flex: none; margin-bottom: 7px; }
.f-row label { width: 79px; flex: none; }
.f-value { height: 24px; }
.f-symbol { height: 22px; }
.f-ramp { height: 26px; margin-top: 1px; }
.field { width: 326px; height: 24px; display: flex; align-items: center; background: #fff; border: 1px solid #bcbcbc; border-radius: 3px; padding-left: 4px; gap: 5px; }
.badge123 { font-size: 9px; font-weight: 700; color: #777; letter-spacing: -.5px; }
.f-drop { margin-left: auto; width: 20px; height: 22px; display: flex; align-items: center; justify-content: center; border-left: 1px solid #ccc; background: linear-gradient(#fbfbfb, #efefef); }
.eps { width: 23px; height: 24px; margin-left: 7px; display: flex; align-items: center; justify-content: center; font-size: 17px; color: #6a3b8c; background: linear-gradient(#fbfbfb, #efefef); border: 1px solid #bcbcbc; border-radius: 3px; }
.sym-btn { width: 344px; height: 22px; padding: 0 4px; }
.sym-btn i { display: block; width: 100%; height: 11px; background: #c63b3b; border: 1px solid #8a3030; }
.ramp-btn { width: 344px; height: 26px; }
.side-drop { width: 11px; height: 100%; margin-left: 1px; display: flex; align-items: center; justify-content: center; background: linear-gradient(#fbfbfb, #efefef); border: 1px solid #bcbcbc; border-radius: 3px; }
.cat-table { flex: 1; min-height: 0; background: #fff; border: 1px solid #bcbcbc; }
.cat-head { height: 21px; display: flex; align-items: center; background: linear-gradient(#f8f8f8, #e8e8e8); border-bottom: 1px solid #c4c4c4; }
.cat-head span { height: 100%; display: flex; align-items: center; padding-left: 2px; }
.ch1 { width: 82px; border-right: 1px solid #c4c4c4; position: relative; }
.ch2 { width: 69px; border-right: 1px solid #c4c4c4; }
.up { position: absolute; left: 68px; top: 7px; border: 4px solid transparent; border-bottom: 5px solid #555; border-top: 0; }
.cat-row { height: 18px; display: flex; align-items: center; padding-left: 3px; }
.cat-row .sw { width: 16px; height: 16px; margin: 0 0 0 6px; }
.cv { width: 69px; margin-left: 47px; flex: none; }
.cat-row .cv { padding-left: 0; }
.other { font-style: italic; color: #888; }
.cat-btns { height: 24px; margin-top: 6px; flex: none; display: flex; gap: 6px; }
.b-classify { width: 80px; }
.b-icon { width: 28px; }
.b-icon svg { width: 16px; height: 16px; }
.b-del { width: 80px; }
.b-adv { width: 84px; margin-left: auto; }
.b-adv .mini-drop { margin-left: 6px; margin-top: 0; }
.rendering { height: 31px; flex: none; display: flex; align-items: center; font-weight: 700; padding-left: 6px; gap: 9px; }
.big-arrow { display: block; border: 5px solid transparent; border-left: 7px solid #333; border-right: 0; }
.apply-row { height: 24px; margin-top: 0; margin-bottom: 1px; flex: none; display: flex; align-items: center; gap: 6px; }
.b-undo { width: 24px; height: 23px; }
.b-undo svg { width: 14px; height: 14px; }
.live { display: flex; align-items: center; gap: 5px; margin-left: auto; margin-right: 7px; }
.b-apply { width: 79px; height: 24px; gap: 2px; }
.b-apply svg { width: 15px; height: 15px; }
.tabs-r { margin-top: 5px; height: 27px; padding-left: 0; margin-left: -3px; }
.tabs-r .tab:first-child { padding: 0 12px 0 11px; }
.tabs-r .tab:nth-child(2) { padding: 0 14px 0 11px; }

.statusbar { height: 32px; flex: none; display: flex; align-items: center; padding: 2px 0 0 4px; font-size: 11px; border-bottom: 2px solid #9a9a9a; }
.locator { width: 271px; height: 26px; flex: none; display: flex; align-items: center; background: #fff; border: 1px solid #c4c4c4; border-radius: 3px; padding: 0 5px; font-size: 13px; gap: 6px; }
.l-s { width: 16px; height: 16px; flex: none; }
.l-c { width: 14px; height: 14px; margin-left: auto; flex: none; }
.s-lab { white-space: nowrap; flex: none; }
.s-coord { margin-left: 765px; margin-right: 3px; }
.s-field { height: 24px; flex: none; display: flex; align-items: center; background: #fff; border: 1px solid #c4c4c4; border-radius: 3px; padding-left: 5px; position: relative; white-space: nowrap; }
.s-fcoord { width: 103px; justify-content: center; padding-left: 0; }
.s-ic { flex: none; }
.crs-ic { width: 16px; height: 16px; margin-left: 5px; }
.s-scale { margin-left: 12px; margin-right: 4px; }
.s-fscale { width: 94px; }
.s-fscale .c-arrow { position: absolute; right: 6px; top: 9px; }
.s-fscale::after { content: ""; position: absolute; right: 18px; top: 0; bottom: 0; width: 1px; background: #ccc; }
.lock-ic { width: 13px; height: 13px; margin-left: 14px; }
.s-magn { margin-left: 10px; margin-right: 3px; }
.s-fmag { width: 98px; }
.s-rot { margin-left: 10px; margin-right: 9px; }
.s-frot { width: 94px; }
.spin { position: absolute; right: 0; top: 0; bottom: 0; width: 14px; border-left: 1px solid #ccc; background: linear-gradient(#fbfbfb, #efefef); }
.spin::before { content: ""; position: absolute; left: 3px; top: 5px; border: 4px solid transparent; border-bottom: 4px solid #555; border-top: 0; }
.spin::after { content: ""; position: absolute; left: 3px; top: 13px; border: 4px solid transparent; border-top: 4px solid #555; border-bottom: 0; }
.s-chk { margin-left: 7px; }
.s-rend { margin-left: 5px; }
.glob-ic { width: 16px; height: 16px; margin-left: 16px; }
.s-epsg { margin-left: 2px; }
.chat-ic { width: 17px; height: 17px; margin-left: 21px; }
```
